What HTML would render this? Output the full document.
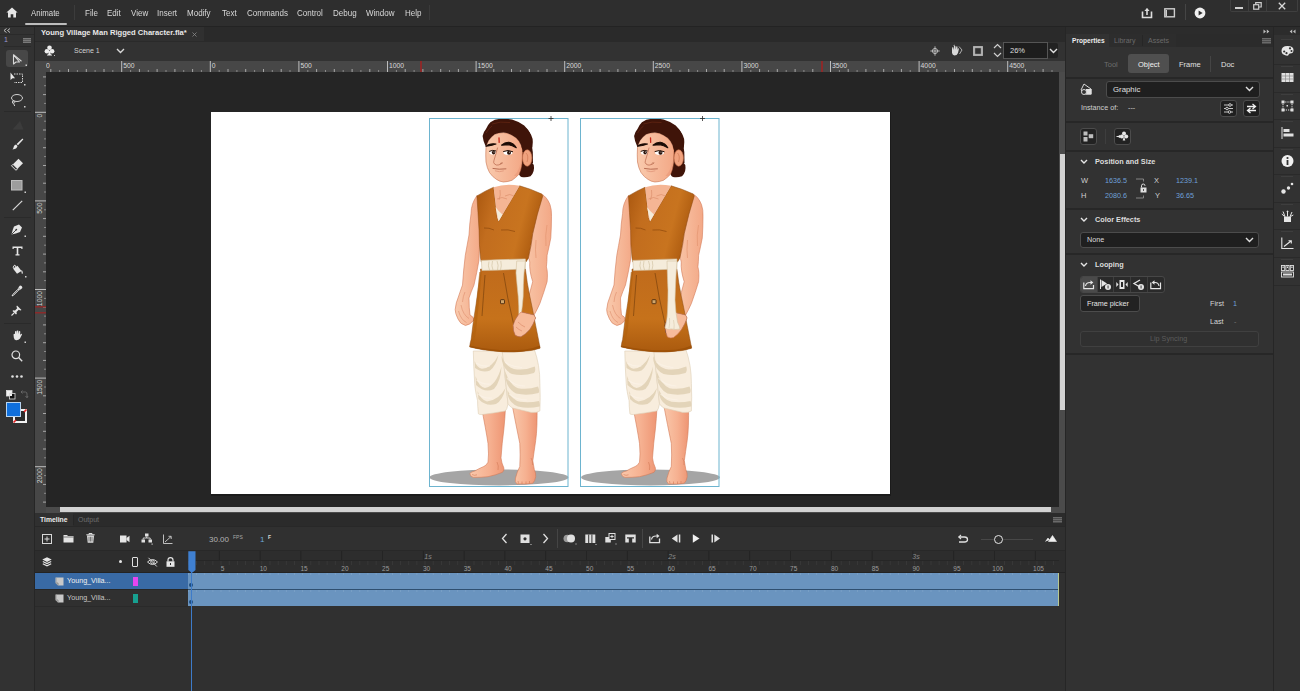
<!DOCTYPE html>
<html><head><meta charset="utf-8">
<style>
*{margin:0;padding:0;box-sizing:border-box}
html,body{width:1300px;height:691px;overflow:hidden;background:#2e2e2e;font-family:"Liberation Sans",sans-serif;color:#d6d6d6}
.a{position:absolute}
.t{position:absolute;white-space:nowrap;font-size:8px;line-height:10px;color:#d0d0d0}
.b{font-weight:bold}
svg{position:absolute;overflow:visible}
</style></head><body>
<!-- MENUBAR -->
<div class="a" style="left:0;top:0;width:1300px;height:26px;background:#2e2e2e"></div>
<div class="a" style="left:0;top:26px;width:1300px;height:1px;background:#232323"></div>
<svg style="left:6px;top:7px" width="12" height="11" viewBox="0 0 12 11"><path d="M6 0.5 L11.6 5.6 L10 5.6 L10 10.5 L7.3 10.5 L7.3 7.3 L4.7 7.3 L4.7 10.5 L2 10.5 L2 5.6 L0.4 5.6 Z" fill="#e6e6e6"/></svg>
<div class="t" style="left:31px;top:7.5px;color:#dcdcdc;font-size:9px;transform:scaleX(.87);transform-origin:0 0">Animate</div>
<div class="a" style="left:25px;top:23px;width:42px;height:2px;background:#bdbdbd;border-radius:1px"></div>
<div class="a" style="left:74px;top:5px;width:1px;height:15px;background:#3c3c3c"></div>
<div class="t" style="left:85px;top:7.5px;font-size:9px;transform:scaleX(.89);transform-origin:0 0;color:#d8d8d8">File</div>
<div class="t" style="left:107px;top:7.5px;font-size:9px;transform:scaleX(.89);transform-origin:0 0;color:#d8d8d8">Edit</div>
<div class="t" style="left:131px;top:7.5px;font-size:9px;transform:scaleX(.89);transform-origin:0 0;color:#d8d8d8">View</div>
<div class="t" style="left:157px;top:7.5px;font-size:9px;transform:scaleX(.89);transform-origin:0 0;color:#d8d8d8">Insert</div>
<div class="t" style="left:187px;top:7.5px;font-size:9px;transform:scaleX(.89);transform-origin:0 0;color:#d8d8d8">Modify</div>
<div class="t" style="left:222px;top:7.5px;font-size:9px;transform:scaleX(.89);transform-origin:0 0;color:#d8d8d8">Text</div>
<div class="t" style="left:247px;top:7.5px;font-size:9px;transform:scaleX(.89);transform-origin:0 0;color:#d8d8d8">Commands</div>
<div class="t" style="left:297px;top:7.5px;font-size:9px;transform:scaleX(.89);transform-origin:0 0;color:#d8d8d8">Control</div>
<div class="t" style="left:333px;top:7.5px;font-size:9px;transform:scaleX(.89);transform-origin:0 0;color:#d8d8d8">Debug</div>
<div class="t" style="left:366px;top:7.5px;font-size:9px;transform:scaleX(.89);transform-origin:0 0;color:#d8d8d8">Window</div>
<div class="t" style="left:405px;top:7.5px;font-size:9px;transform:scaleX(.89);transform-origin:0 0;color:#d8d8d8">Help</div>
<div class="a" style="left:429px;top:5px;width:1px;height:15px;background:#3a3a3a"></div>
<svg style="left:1141px;top:7px" width="12" height="12" viewBox="0 0 12 12"><path d="M1.5 4.5 V10.5 H10.5 V4.5" fill="none" stroke="#dedede" stroke-width="1.6"/><path d="M6 8 V1.8" stroke="#dedede" stroke-width="1.6"/><path d="M3.4 4 L6 1 L8.6 4 Z" fill="#dedede"/></svg>
<svg style="left:1164px;top:8px" width="12" height="10" viewBox="0 0 12 10"><rect x="0.8" y="0.8" width="9.6" height="8" fill="none" stroke="#cfcfcf" stroke-width="1.4"/><rect x="1.5" y="2" width="1.5" height="6" fill="#cfcfcf"/></svg>
<div class="a" style="left:1185px;top:4px;width:1px;height:16px;background:#454545"></div>
<svg style="left:1194px;top:7px" width="12" height="12" viewBox="0 0 12 12"><circle cx="6" cy="6" r="5.4" fill="#f0f0f0"/><path d="M4.6 3.4 L8.6 6 L4.6 8.6 Z" fill="#2e2e2e"/></svg>
<div class="a" style="left:1230px;top:-1px;width:68px;height:13px;border:1px solid #3f3f3f;border-top:none;border-radius:0 0 2px 2px"></div>
<div class="a" style="left:1248px;top:0;width:1px;height:12px;background:#3f3f3f"></div>
<div class="a" style="left:1266px;top:0;width:1px;height:12px;background:#3f3f3f"></div>
<div class="a" style="left:1235px;top:7px;width:8px;height:2px;background:#d0d0d0"></div>
<svg style="left:1253px;top:2px" width="9" height="8" viewBox="0 0 9 8"><rect x="0.7" y="2.7" width="5" height="4.5" fill="none" stroke="#cfcfcf" stroke-width="1.2"/><path d="M2.7 2.5 V0.7 H8.2 V5 H6" fill="none" stroke="#cfcfcf" stroke-width="1.2"/></svg>
<svg style="left:1278px;top:2px" width="8" height="8" viewBox="0 0 8 8"><path d="M0.8 0.8 L7.2 7.2 M7.2 0.8 L0.8 7.2" stroke="#d8d8d8" stroke-width="1.3"/></svg>
<!-- LEFT TOOLBAR -->
<div class="a" style="left:0;top:27px;width:34px;height:664px;background:#323232"></div>
<div class="a" style="left:34px;top:27px;width:1px;height:664px;background:#262626"></div>
<svg style="left:3px;top:28px" width="8" height="5" viewBox="0 0 8 5"><path d="M3.5 0.5 L1 2.5 L3.5 4.5 M7 0.5 L4.5 2.5 L7 4.5" fill="none" stroke="#bdbdbd" stroke-width="1"/></svg>
<div class="a" style="left:0;top:34px;width:34px;height:1px;background:#2a2a2a"></div>
<div class="t" style="left:4px;top:35px;font-size:7px;color:#9a9ad0">1</div>
<div class="a" style="left:23px;top:38px;width:8px;height:5px;background:repeating-linear-gradient(#7a7a7a 0 1px,#5a5a5a 1px 2px)"></div>
<div class="a" style="left:4px;top:46px;width:27px;height:1px;background:#2a2a2a"></div>
<div class="a" style="left:6px;top:50px;width:22px;height:17px;background:#474747;border-radius:3px"></div>
<svg style="left:12px;top:54px" width="17" height="13" viewBox="0 0 17 13"><path d="M1.5 0.8 L1.5 10 L4 8 L7.5 8 Z" fill="none" stroke="#d8d8d8" stroke-width="1.1" stroke-linejoin="round"/><path d="M1.5 0.8 L9.5 7.3" stroke="#d8d8d8" stroke-width="1.1"/><rect x="13.5" y="10.5" width="1.5" height="1.5" fill="#cfcfcf"/></svg>
<svg style="left:10px;top:72px" width="17" height="14" viewBox="0 0 17 14"><path d="M0.5 0.5 L0.5 8 L2.5 6.3 L5 6.3 Z" fill="#e8e8e8"/><path d="M4 2 H12.5 V10.5 H4" fill="none" stroke="#d6d6d6" stroke-width="1" stroke-dasharray="1.5 1"/><rect x="14" y="12" width="1.5" height="1.5" fill="#cfcfcf"/></svg>
<svg style="left:10px;top:93px" width="17" height="15" viewBox="0 0 17 15"><ellipse cx="7" cy="5" rx="5.5" ry="3.5" fill="none" stroke="#d0d0d0" stroke-width="1"/><path d="M3.5 7.5 Q1.5 9 3 10.5 Q5 11.5 4.5 13" fill="none" stroke="#d0d0d0" stroke-width="1"/><circle cx="3.7" cy="9" r="1.2" fill="none" stroke="#d0d0d0" stroke-width="0.8"/><rect x="14" y="13" width="1.5" height="1.5" fill="#cfcfcf"/></svg>
<div class="a" style="left:4px;top:111px;width:27px;height:1px;background:#2a2a2a"></div>
<svg style="left:12px;top:120px" width="12" height="10" viewBox="0 0 12 10"><path d="M0.5 9.5 L8 1 L11.5 9.5 Z" fill="#3c3c3c"/></svg>
<svg style="left:12px;top:138px" width="12" height="12" viewBox="0 0 12 12"><path d="M10.5 0.6 L11.3 1.4 L6 7.3 L4.6 6 Z" fill="#e8e8e8"/><path d="M4 6.6 L5.5 8 Q5 11 0.5 11.5 Q1.5 10.5 1.7 8.7 Q2.3 6.8 4 6.6 Z" fill="#e8e8e8"/></svg>
<svg style="left:11px;top:158px" width="13" height="13" viewBox="0 0 13 13"><path d="M7.5 0.8 L12 5.3 L6.5 10.8 L2 6.3 Z" fill="#e6e6e6"/><path d="M2 6.3 L6.5 10.8 L5 12.3 L0.5 7.8 Z" fill="none" stroke="#e6e6e6" stroke-width="1"/></svg>
<svg style="left:11px;top:180px" width="16" height="14" viewBox="0 0 16 14"><rect x="0.5" y="0.5" width="10.5" height="9.5" fill="#9d9d9d" stroke="#bdbdbd" stroke-width="1"/><rect x="13.5" y="11.5" width="1.5" height="1.5" fill="#cfcfcf"/></svg>
<svg style="left:12px;top:200px" width="11" height="11" viewBox="0 0 11 11"><path d="M0.8 10.2 L10.2 0.8" stroke="#d8d8d8" stroke-width="1.2"/></svg>
<div class="a" style="left:4px;top:217px;width:27px;height:1px;background:#2a2a2a"></div>
<svg style="left:11px;top:224px" width="16" height="14" viewBox="0 0 16 14"><path d="M8 0.5 L11 3.5 L9 8 Q5 9.5 0.5 10.5 Q1.5 6 3 2.5 Z" fill="#e6e6e6"/><path d="M0.8 10.2 L5 6" stroke="#323232" stroke-width="0.9"/><circle cx="5.3" cy="5.6" r="0.9" fill="#323232"/><rect x="13.5" y="11.5" width="1.5" height="1.5" fill="#cfcfcf"/></svg>
<svg style="left:12px;top:246px" width="11" height="10" viewBox="0 0 11 10"><path d="M0.5 0.5 H10.5 V3 H9.3 V1.9 H6.3 V8.3 H7.5 V9.5 H3.5 V8.3 H4.7 V1.9 H1.7 V3 H0.5 Z" fill="#e6e6e6"/></svg>
<svg style="left:12px;top:264px" width="15" height="14" viewBox="0 0 15 14"><path d="M1 4.5 L5.5 1.8 L9.5 7 L5 9.8 Z" fill="#e6e6e6"/><path d="M1.2 4 Q1 1.5 3 1 L3.5 3" fill="none" stroke="#e6e6e6" stroke-width="0.9"/><path d="M9.5 6.5 Q10.5 8 10.2 9.6" fill="none" stroke="#e6e6e6" stroke-width="1.2"/><rect x="13" y="12" width="1.5" height="1.5" fill="#cfcfcf"/></svg>
<svg style="left:11px;top:285px" width="12" height="12" viewBox="0 0 12 12"><path d="M9 0.5 Q11.5 0.5 11.3 3 L9.5 4.7 L7.3 2.5 Z" fill="#e6e6e6"/><path d="M7 3.5 L8.5 5" stroke="#e6e6e6" stroke-width="1.4"/><path d="M7 4.2 L2 9.3 L1 11 L2.7 10 L7.8 5" fill="none" stroke="#e6e6e6" stroke-width="1"/></svg>
<svg style="left:11px;top:305px" width="11" height="11" viewBox="0 0 11 11"><path d="M6 0.5 L10.5 5 L9.3 5.6 L7.7 4.8 L5.5 7 L5.8 8.8 L5 9.5 L1.5 6 L2.2 5.2 L4 5.5 L6.2 3.3 L5.4 1.7 Z" fill="#e6e6e6"/><path d="M3.2 7.8 L0.5 10.5" stroke="#e6e6e6" stroke-width="1.1"/></svg>
<div class="a" style="left:4px;top:323px;width:27px;height:1px;background:#2a2a2a"></div>
<svg style="left:11px;top:330px" width="16" height="14" viewBox="0 0 16 14"><path d="M2.5 4.5 Q3 3.5 4 4 L4 1.8 Q4.3 0.8 5.3 1.2 L5.5 4 L5.7 0.8 Q6.5 0 7.3 0.8 L7.3 4 L8 1.2 Q9 0.7 9.3 1.7 L9 5 L10 3.8 Q11 3.6 11 4.5 L9 8.5 Q7.5 10.5 5 10.3 Q3.2 10 2.8 7.5 Z" fill="#e6e6e6"/><rect x="13.5" y="11.5" width="1.5" height="1.5" fill="#cfcfcf"/></svg>
<svg style="left:11px;top:350px" width="12" height="12" viewBox="0 0 12 12"><circle cx="4.8" cy="4.8" r="3.8" fill="none" stroke="#e0e0e0" stroke-width="1.2"/><path d="M7.6 7.6 L11.2 11.2" stroke="#e0e0e0" stroke-width="1.4"/></svg>
<svg style="left:11px;top:375px" width="12" height="3" viewBox="0 0 12 3"><circle cx="1.5" cy="1.5" r="1.3" fill="#e0e0e0"/><circle cx="6" cy="1.5" r="1.3" fill="#e0e0e0"/><circle cx="10.5" cy="1.5" r="1.3" fill="#e0e0e0"/></svg>
<svg style="left:6px;top:390px" width="10" height="10" viewBox="0 0 10 10"><rect x="0.5" y="0.5" width="5.5" height="5.5" fill="#f0f0f0" stroke="#ddd" stroke-width="0.8"/><rect x="3.5" y="3.5" width="5.5" height="5.5" fill="#111" stroke="#ddd" stroke-width="0.8"/><rect x="3.5" y="3.5" width="2.5" height="2.5" fill="#f0f0f0"/></svg>
<svg style="left:20px;top:390px" width="8" height="9" viewBox="0 0 8 9"><path d="M1 2 H5.5 Q7 2 7 4 V7.5 M5.5 6 L7 7.8 L8 6 M2.5 0.5 L1 2 L2.5 3.5" fill="none" stroke="#6a6a6a" stroke-width="0.9"/></svg>
<div class="a" style="left:13px;top:409px;width:14px;height:14px;border:2.5px solid #f2f2f2;background:#2b2b2b"></div>
<svg style="left:13px;top:409px" width="14" height="14" viewBox="0 0 14 14"><path d="M0.5 13.5 L3 11 M11 3 L13.5 0.5" stroke="#e02020" stroke-width="1.6"/></svg>
<div class="a" style="left:6px;top:402px;width:15px;height:15px;background:#0f6fdc;border:1px solid #b8d4f0"></div>
<!-- DOC TABS & SCENE BAR -->
<div class="a" style="left:35px;top:27px;width:1030px;height:15px;background:#2a2a2a"></div>
<div class="a" style="left:35px;top:27px;width:169px;height:14px;background:#303030"></div>
<div class="t b" style="left:41px;top:28px;font-size:7.6px;color:#e8e8e8">Young Village Man Rigged Character.fla*</div>
<svg style="left:192px;top:32px" width="5" height="5" viewBox="0 0 5 5"><path d="M0.5 0.5 L4.5 4.5 M4.5 0.5 L0.5 4.5" stroke="#8a8a8a" stroke-width="0.8"/></svg>
<div class="a" style="left:35px;top:42px;width:1030px;height:19px;background:#323232"></div>
<svg style="left:44px;top:45px" width="12" height="12" viewBox="0 0 12 12"><circle cx="5.5" cy="2.8" r="2.3" fill="#eee"/><circle cx="2.9" cy="6.2" r="2.3" fill="#eee"/><circle cx="8.1" cy="6.2" r="2.3" fill="#eee"/><path d="M5.5 5 L7 10 H4 Z" fill="#eee"/><rect x="3" y="9.6" width="5" height="0.9" fill="#eee"/><rect x="10" y="10" width="1" height="1" fill="#bbb"/></svg>
<div class="t" style="left:74px;top:46px;font-size:7px">Scene 1</div>
<svg style="left:116px;top:48px" width="9" height="6" viewBox="0 0 9 6"><path d="M1 1 L4.5 4.5 L8 1" fill="none" stroke="#d8d8d8" stroke-width="1.4"/></svg>
<svg style="left:930px;top:46px" width="10" height="10" viewBox="0 0 10 10"><circle cx="5" cy="5" r="2.6" fill="none" stroke="#d0d0d0" stroke-width="0.8"/><path d="M5 0.3 V9.7 M0.3 5 H9.7" stroke="#d0d0d0" stroke-width="0.8"/></svg>
<svg style="left:950px;top:45px" width="13" height="11" viewBox="0 0 13 11"><path d="M2 4 Q2 2 3 2 L3.5 5 L4 1 Q5 0.5 5.5 1.5 L5.7 4.5 L6.3 1.5 Q7.3 1 7.5 2 L7.4 5 L8 3 Q9 3 8.8 4.5 L8 8 Q7 10.5 4.5 10.5 Q2.5 10 2 8 Z" fill="#d8d8d8"/><path d="M9 1.5 L12 5 L9.5 9" fill="none" stroke="#bbb" stroke-width="0.9"/><path d="M3.5 0.5 L5 0.2" stroke="#bbb" stroke-width="0.8"/></svg>
<svg style="left:973px;top:46px" width="10" height="10" viewBox="0 0 10 10"><rect x="0" y="0" width="10" height="10" fill="#9a9a9a"/><rect x="2.2" y="2.2" width="5.6" height="5.6" fill="#323232"/><rect x="1" y="1" width="8" height="8" fill="none" stroke="#c8c8c8" stroke-width="0.8"/></svg>
<svg style="left:993px;top:43px" width="9" height="15" viewBox="0 0 9 15"><path d="M1 5 L4.5 1.5 L8 5 M1 10 L4.5 13.5 L8 10" fill="none" stroke="#d0d0d0" stroke-width="1.2"/></svg>
<div class="a" style="left:1003px;top:42px;width:45px;height:17px;background:#1d1d1d;border:1px solid #555"></div>
<div class="t" style="left:1010px;top:46px;font-size:7.5px;color:#dedede">26%</div>
<div class="a" style="left:1048px;top:43px;width:10px;height:15px;background:#222;border-radius:0 2px 2px 0"></div>
<svg style="left:1049px;top:48px" width="9" height="6" viewBox="0 0 9 6"><path d="M1 1 L4.5 4.5 L8 1" fill="none" stroke="#e0e0e0" stroke-width="1.4"/></svg>
<!-- RULERS / PASTEBOARD -->
<div class="a" style="left:35px;top:61px;width:1030px;height:11px;background:#474747"></div>
<div class="a" style="left:35px;top:61px;width:11px;height:452px;background:#474747"></div>
<div class="a" style="left:46px;top:72px;width:1013px;height:435px;background:#252525"></div>
<svg style="left:46px;top:61px;overflow:hidden" width="1019" height="11" viewBox="0 0 1019 11"><rect x="4.3" y="8" width="1" height="3" fill="#a8a8a8"/><rect x="13.2" y="9" width="1" height="2" fill="#8a8a8a"/><rect x="22.0" y="8" width="1" height="3" fill="#a8a8a8"/><rect x="30.9" y="9" width="1" height="2" fill="#8a8a8a"/><rect x="39.8" y="8" width="1" height="3" fill="#a8a8a8"/><rect x="48.6" y="9" width="1" height="2" fill="#8a8a8a"/><rect x="57.5" y="8" width="1" height="3" fill="#a8a8a8"/><rect x="66.3" y="9" width="1" height="2" fill="#8a8a8a"/><text x="-11.4" y="7" font-size="6.8" fill="#d8d8d8" font-family="Liberation Sans">1000</text><rect x="75.2" y="0" width="1" height="11" fill="#bdbdbd"/><rect x="84.1" y="9" width="1" height="2" fill="#8a8a8a"/><rect x="92.9" y="8" width="1" height="3" fill="#a8a8a8"/><rect x="101.8" y="9" width="1" height="2" fill="#8a8a8a"/><rect x="110.6" y="8" width="1" height="3" fill="#a8a8a8"/><rect x="119.5" y="9" width="1" height="2" fill="#8a8a8a"/><rect x="128.4" y="8" width="1" height="3" fill="#a8a8a8"/><rect x="137.2" y="9" width="1" height="2" fill="#8a8a8a"/><rect x="146.1" y="8" width="1" height="3" fill="#a8a8a8"/><rect x="154.9" y="9" width="1" height="2" fill="#8a8a8a"/><text x="77.2" y="7" font-size="6.8" fill="#d8d8d8" font-family="Liberation Sans">500</text><rect x="163.8" y="0" width="1" height="11" fill="#bdbdbd"/><rect x="172.7" y="9" width="1" height="2" fill="#8a8a8a"/><rect x="181.5" y="8" width="1" height="3" fill="#a8a8a8"/><rect x="190.4" y="9" width="1" height="2" fill="#8a8a8a"/><rect x="199.2" y="8" width="1" height="3" fill="#a8a8a8"/><rect x="208.1" y="9" width="1" height="2" fill="#8a8a8a"/><rect x="217.0" y="8" width="1" height="3" fill="#a8a8a8"/><rect x="225.8" y="9" width="1" height="2" fill="#8a8a8a"/><rect x="234.7" y="8" width="1" height="3" fill="#a8a8a8"/><rect x="243.5" y="9" width="1" height="2" fill="#8a8a8a"/><text x="165.8" y="7" font-size="6.8" fill="#d8d8d8" font-family="Liberation Sans">0</text><rect x="252.4" y="0" width="1" height="11" fill="#bdbdbd"/><rect x="261.3" y="9" width="1" height="2" fill="#8a8a8a"/><rect x="270.1" y="8" width="1" height="3" fill="#a8a8a8"/><rect x="279.0" y="9" width="1" height="2" fill="#8a8a8a"/><rect x="287.8" y="8" width="1" height="3" fill="#a8a8a8"/><rect x="296.7" y="9" width="1" height="2" fill="#8a8a8a"/><rect x="305.6" y="8" width="1" height="3" fill="#a8a8a8"/><rect x="314.4" y="9" width="1" height="2" fill="#8a8a8a"/><rect x="323.3" y="8" width="1" height="3" fill="#a8a8a8"/><rect x="332.1" y="9" width="1" height="2" fill="#8a8a8a"/><text x="254.4" y="7" font-size="6.8" fill="#d8d8d8" font-family="Liberation Sans">500</text><rect x="341.0" y="0" width="1" height="11" fill="#bdbdbd"/><rect x="349.9" y="9" width="1" height="2" fill="#8a8a8a"/><rect x="358.7" y="8" width="1" height="3" fill="#a8a8a8"/><rect x="367.6" y="9" width="1" height="2" fill="#8a8a8a"/><rect x="376.4" y="8" width="1" height="3" fill="#a8a8a8"/><rect x="385.3" y="9" width="1" height="2" fill="#8a8a8a"/><rect x="394.2" y="8" width="1" height="3" fill="#a8a8a8"/><rect x="403.0" y="9" width="1" height="2" fill="#8a8a8a"/><rect x="411.9" y="8" width="1" height="3" fill="#a8a8a8"/><rect x="420.7" y="9" width="1" height="2" fill="#8a8a8a"/><text x="343.0" y="7" font-size="6.8" fill="#d8d8d8" font-family="Liberation Sans">1000</text><rect x="429.6" y="0" width="1" height="11" fill="#bdbdbd"/><rect x="438.5" y="9" width="1" height="2" fill="#8a8a8a"/><rect x="447.3" y="8" width="1" height="3" fill="#a8a8a8"/><rect x="456.2" y="9" width="1" height="2" fill="#8a8a8a"/><rect x="465.0" y="8" width="1" height="3" fill="#a8a8a8"/><rect x="473.9" y="9" width="1" height="2" fill="#8a8a8a"/><rect x="482.8" y="8" width="1" height="3" fill="#a8a8a8"/><rect x="491.6" y="9" width="1" height="2" fill="#8a8a8a"/><rect x="500.5" y="8" width="1" height="3" fill="#a8a8a8"/><rect x="509.3" y="9" width="1" height="2" fill="#8a8a8a"/><text x="431.6" y="7" font-size="6.8" fill="#d8d8d8" font-family="Liberation Sans">1500</text><rect x="518.2" y="0" width="1" height="11" fill="#bdbdbd"/><rect x="527.1" y="9" width="1" height="2" fill="#8a8a8a"/><rect x="535.9" y="8" width="1" height="3" fill="#a8a8a8"/><rect x="544.8" y="9" width="1" height="2" fill="#8a8a8a"/><rect x="553.6" y="8" width="1" height="3" fill="#a8a8a8"/><rect x="562.5" y="9" width="1" height="2" fill="#8a8a8a"/><rect x="571.4" y="8" width="1" height="3" fill="#a8a8a8"/><rect x="580.2" y="9" width="1" height="2" fill="#8a8a8a"/><rect x="589.1" y="8" width="1" height="3" fill="#a8a8a8"/><rect x="597.9" y="9" width="1" height="2" fill="#8a8a8a"/><text x="520.2" y="7" font-size="6.8" fill="#d8d8d8" font-family="Liberation Sans">2000</text><rect x="606.8" y="0" width="1" height="11" fill="#bdbdbd"/><rect x="615.7" y="9" width="1" height="2" fill="#8a8a8a"/><rect x="624.5" y="8" width="1" height="3" fill="#a8a8a8"/><rect x="633.4" y="9" width="1" height="2" fill="#8a8a8a"/><rect x="642.2" y="8" width="1" height="3" fill="#a8a8a8"/><rect x="651.1" y="9" width="1" height="2" fill="#8a8a8a"/><rect x="660.0" y="8" width="1" height="3" fill="#a8a8a8"/><rect x="668.8" y="9" width="1" height="2" fill="#8a8a8a"/><rect x="677.7" y="8" width="1" height="3" fill="#a8a8a8"/><rect x="686.5" y="9" width="1" height="2" fill="#8a8a8a"/><text x="608.8" y="7" font-size="6.8" fill="#d8d8d8" font-family="Liberation Sans">2500</text><rect x="695.4" y="0" width="1" height="11" fill="#bdbdbd"/><rect x="704.3" y="9" width="1" height="2" fill="#8a8a8a"/><rect x="713.1" y="8" width="1" height="3" fill="#a8a8a8"/><rect x="722.0" y="9" width="1" height="2" fill="#8a8a8a"/><rect x="730.8" y="8" width="1" height="3" fill="#a8a8a8"/><rect x="739.7" y="9" width="1" height="2" fill="#8a8a8a"/><rect x="748.6" y="8" width="1" height="3" fill="#a8a8a8"/><rect x="757.4" y="9" width="1" height="2" fill="#8a8a8a"/><rect x="766.3" y="8" width="1" height="3" fill="#a8a8a8"/><rect x="775.1" y="9" width="1" height="2" fill="#8a8a8a"/><text x="697.4" y="7" font-size="6.8" fill="#d8d8d8" font-family="Liberation Sans">3000</text><rect x="784.0" y="0" width="1" height="11" fill="#bdbdbd"/><rect x="792.9" y="9" width="1" height="2" fill="#8a8a8a"/><rect x="801.7" y="8" width="1" height="3" fill="#a8a8a8"/><rect x="810.6" y="9" width="1" height="2" fill="#8a8a8a"/><rect x="819.4" y="8" width="1" height="3" fill="#a8a8a8"/><rect x="828.3" y="9" width="1" height="2" fill="#8a8a8a"/><rect x="837.2" y="8" width="1" height="3" fill="#a8a8a8"/><rect x="846.0" y="9" width="1" height="2" fill="#8a8a8a"/><rect x="854.9" y="8" width="1" height="3" fill="#a8a8a8"/><rect x="863.7" y="9" width="1" height="2" fill="#8a8a8a"/><text x="786.0" y="7" font-size="6.8" fill="#d8d8d8" font-family="Liberation Sans">3500</text><rect x="872.6" y="0" width="1" height="11" fill="#bdbdbd"/><rect x="881.5" y="9" width="1" height="2" fill="#8a8a8a"/><rect x="890.3" y="8" width="1" height="3" fill="#a8a8a8"/><rect x="899.2" y="9" width="1" height="2" fill="#8a8a8a"/><rect x="908.0" y="8" width="1" height="3" fill="#a8a8a8"/><rect x="916.9" y="9" width="1" height="2" fill="#8a8a8a"/><rect x="925.8" y="8" width="1" height="3" fill="#a8a8a8"/><rect x="934.6" y="9" width="1" height="2" fill="#8a8a8a"/><rect x="943.5" y="8" width="1" height="3" fill="#a8a8a8"/><rect x="952.3" y="9" width="1" height="2" fill="#8a8a8a"/><text x="874.6" y="7" font-size="6.8" fill="#d8d8d8" font-family="Liberation Sans">4000</text><rect x="961.2" y="0" width="1" height="11" fill="#bdbdbd"/><rect x="970.1" y="9" width="1" height="2" fill="#8a8a8a"/><rect x="978.9" y="8" width="1" height="3" fill="#a8a8a8"/><rect x="987.8" y="9" width="1" height="2" fill="#8a8a8a"/><rect x="996.6" y="8" width="1" height="3" fill="#a8a8a8"/><rect x="1005.5" y="9" width="1" height="2" fill="#8a8a8a"/><text x="963.2" y="7" font-size="6.8" fill="#d8d8d8" font-family="Liberation Sans">4500</text><rect x="374" y="0" width="2" height="11" fill="#8b2a2a"/><rect x="775" y="0" width="2" height="11" fill="#8b2a2a"/></svg>
<svg style="left:35px;top:72px;overflow:hidden" width="11" height="441" viewBox="0 0 11 441"><rect x="8" y="4.4" width="3" height="1" fill="#a8a8a8"/><rect x="9" y="13.2" width="2" height="1" fill="#8a8a8a"/><rect x="8" y="22.1" width="3" height="1" fill="#a8a8a8"/><rect x="9" y="30.9" width="2" height="1" fill="#8a8a8a"/><rect x="0" y="39.8" width="11" height="1" fill="#bdbdbd"/><rect x="9" y="48.7" width="2" height="1" fill="#8a8a8a"/><rect x="8" y="57.5" width="3" height="1" fill="#a8a8a8"/><rect x="9" y="66.4" width="2" height="1" fill="#8a8a8a"/><rect x="8" y="75.2" width="3" height="1" fill="#a8a8a8"/><rect x="9" y="84.1" width="2" height="1" fill="#8a8a8a"/><rect x="8" y="93.0" width="3" height="1" fill="#a8a8a8"/><rect x="9" y="101.8" width="2" height="1" fill="#8a8a8a"/><rect x="8" y="110.7" width="3" height="1" fill="#a8a8a8"/><rect x="9" y="119.5" width="2" height="1" fill="#8a8a8a"/><text transform="translate(7,41.8) rotate(-90)" text-anchor="end" font-size="6.8" fill="#d8d8d8" font-family="Liberation Sans">0</text><rect x="0" y="128.4" width="11" height="1" fill="#bdbdbd"/><rect x="9" y="137.3" width="2" height="1" fill="#8a8a8a"/><rect x="8" y="146.1" width="3" height="1" fill="#a8a8a8"/><rect x="9" y="155.0" width="2" height="1" fill="#8a8a8a"/><rect x="8" y="163.8" width="3" height="1" fill="#a8a8a8"/><rect x="9" y="172.7" width="2" height="1" fill="#8a8a8a"/><rect x="8" y="181.6" width="3" height="1" fill="#a8a8a8"/><rect x="9" y="190.4" width="2" height="1" fill="#8a8a8a"/><rect x="8" y="199.3" width="3" height="1" fill="#a8a8a8"/><rect x="9" y="208.1" width="2" height="1" fill="#8a8a8a"/><text transform="translate(7,130.4) rotate(-90)" text-anchor="end" font-size="6.8" fill="#d8d8d8" font-family="Liberation Sans">500</text><rect x="0" y="217.0" width="11" height="1" fill="#bdbdbd"/><rect x="9" y="225.9" width="2" height="1" fill="#8a8a8a"/><rect x="8" y="234.7" width="3" height="1" fill="#a8a8a8"/><rect x="9" y="243.6" width="2" height="1" fill="#8a8a8a"/><rect x="8" y="252.4" width="3" height="1" fill="#a8a8a8"/><rect x="9" y="261.3" width="2" height="1" fill="#8a8a8a"/><rect x="8" y="270.2" width="3" height="1" fill="#a8a8a8"/><rect x="9" y="279.0" width="2" height="1" fill="#8a8a8a"/><rect x="8" y="287.9" width="3" height="1" fill="#a8a8a8"/><rect x="9" y="296.7" width="2" height="1" fill="#8a8a8a"/><text transform="translate(7,219.0) rotate(-90)" text-anchor="end" font-size="6.8" fill="#d8d8d8" font-family="Liberation Sans">1000</text><rect x="0" y="305.6" width="11" height="1" fill="#bdbdbd"/><rect x="9" y="314.5" width="2" height="1" fill="#8a8a8a"/><rect x="8" y="323.3" width="3" height="1" fill="#a8a8a8"/><rect x="9" y="332.2" width="2" height="1" fill="#8a8a8a"/><rect x="8" y="341.0" width="3" height="1" fill="#a8a8a8"/><rect x="9" y="349.9" width="2" height="1" fill="#8a8a8a"/><rect x="8" y="358.8" width="3" height="1" fill="#a8a8a8"/><rect x="9" y="367.6" width="2" height="1" fill="#8a8a8a"/><rect x="8" y="376.5" width="3" height="1" fill="#a8a8a8"/><rect x="9" y="385.3" width="2" height="1" fill="#8a8a8a"/><text transform="translate(7,307.6) rotate(-90)" text-anchor="end" font-size="6.8" fill="#d8d8d8" font-family="Liberation Sans">1500</text><rect x="0" y="394.2" width="11" height="1" fill="#bdbdbd"/><rect x="9" y="403.1" width="2" height="1" fill="#8a8a8a"/><rect x="8" y="411.9" width="3" height="1" fill="#a8a8a8"/><rect x="9" y="420.8" width="2" height="1" fill="#8a8a8a"/><rect x="8" y="429.6" width="3" height="1" fill="#a8a8a8"/><text transform="translate(7,396.2) rotate(-90)" text-anchor="end" font-size="6.8" fill="#d8d8d8" font-family="Liberation Sans">2000</text><text transform="translate(7,484.8) rotate(-90)" text-anchor="end" font-size="6.8" fill="#d8d8d8" font-family="Liberation Sans">2500</text><rect x="0" y="234" width="11" height="1.5" fill="#8b2a2a"/><rect x="0" y="240" width="11" height="1.5" fill="#8b2a2a"/></svg>
<div class="a" style="left:210.5px;top:111.5px;width:680px;height:384px;background:#1b1b1b;filter:blur(0.5px)"></div>
<div class="a" style="left:211px;top:112px;width:679px;height:382px;background:#fff"></div>
<div class="a" style="left:1059px;top:72px;width:6px;height:435px;background:#4b4b4b"></div>
<div class="a" style="left:1060px;top:154px;width:5px;height:256px;background:#d2d2d2"></div>
<div class="a" style="left:46px;top:507px;width:1019px;height:6px;background:#4b4b4b"></div>
<div class="a" style="left:60px;top:507px;width:991px;height:5px;background:#d2d2d2"></div>
<!-- TIMELINE -->
<div class="a" style="left:35px;top:513px;width:1030px;height:178px;background:#303030"></div>
<div class="a" style="left:35px;top:513px;width:1030px;height:13px;background:#2b2b2b"></div>
<div class="a" style="left:35px;top:513px;width:38px;height:13px;background:#303030"></div>
<div class="a" style="left:73px;top:515px;width:1px;height:10px;background:#262626"></div>
<div class="t b" style="left:40px;top:515px;font-size:6.8px;color:#ececec">Timeline</div>
<div class="t" style="left:78px;top:515px;font-size:7px;color:#6e6e6e">Output</div>
<div class="a" style="left:1053px;top:517px;width:9px;height:6px;background:repeating-linear-gradient(#6a6a6a 0 1px,#4c4c4c 1px 2px)"></div>
<div class="a" style="left:35px;top:526px;width:1030px;height:1px;background:#282828"></div>
<svg style="left:42px;top:534px" width="10" height="10" viewBox="0 0 10 10"><rect x="0.5" y="0.5" width="9" height="9" fill="none" stroke="#d8d8d8" stroke-width="1"/><path d="M5 2.5 V7.5 M2.5 5 H7.5" stroke="#d8d8d8" stroke-width="1"/></svg>
<svg style="left:63px;top:534px" width="11" height="9" viewBox="0 0 11 9"><path d="M0.5 1 H4 L5 2 H10.5 V8.5 H0.5 Z" fill="#e4e4e4"/><path d="M0.5 3 H10.5" stroke="#303030" stroke-width="0.6"/></svg>
<svg style="left:86px;top:533px" width="9" height="10" viewBox="0 0 9 10"><path d="M0.3 1.8 H8.7 M3 1.8 V0.5 H6 V1.8" fill="none" stroke="#dedede" stroke-width="1"/><path d="M1 2.5 H8 L7.3 9.7 H1.7 Z" fill="#dedede"/><path d="M3 3.8 V8.5 M4.5 3.8 V8.5 M6 3.8 V8.5" stroke="#303030" stroke-width="0.6"/></svg>
<svg style="left:120px;top:535px" width="10" height="8" viewBox="0 0 10 8"><rect x="0" y="0.5" width="6.5" height="7" fill="#e6e6e6"/><path d="M6.5 3 L9.5 0.8 V7.2 L6.5 5 Z" fill="#e6e6e6"/></svg>
<svg style="left:141px;top:533px" width="12" height="12" viewBox="0 0 12 12"><rect x="4" y="0.5" width="3.5" height="3" fill="#e0e0e0"/><rect x="0.5" y="6.5" width="3.5" height="3" fill="#e0e0e0"/><rect x="7.5" y="6.5" width="3.5" height="3" fill="#e0e0e0"/><path d="M5.7 3.5 V5 H2.2 V6.5 M5.7 5 H9.2 V6.5" fill="none" stroke="#e0e0e0" stroke-width="0.9"/><rect x="10.5" y="10.5" width="1.2" height="1.2" fill="#ccc"/></svg>
<svg style="left:163px;top:534px" width="10" height="10" viewBox="0 0 10 10"><path d="M0.5 0.5 V9.5 H9.5" fill="none" stroke="#cfcfcf" stroke-width="0.9"/><path d="M2 8 L8 2.5 M5.5 2.3 H8.2 V5" fill="none" stroke="#cfcfcf" stroke-width="0.9"/></svg>
<div class="a" style="left:35px;top:550px;width:1030px;height:1px;background:#282828"></div>
<div class="a" style="left:35px;top:551px;width:153px;height:21px;background:#2d2d2d"></div>
<svg style="left:42px;top:557px" width="10" height="10" viewBox="0 0 10 10"><path d="M5 0.3 L9.7 2.6 L5 4.9 L0.3 2.6 Z" fill="#e6e6e6"/><path d="M0.8 4.5 L5 6.6 L9.2 4.5" fill="none" stroke="#e6e6e6" stroke-width="1.1"/><path d="M0.8 6.7 L5 8.8 L9.2 6.7" fill="none" stroke="#e6e6e6" stroke-width="1.1"/></svg>
<div class="a" style="left:118.5px;top:560.3px;width:3px;height:3px;border-radius:50%;background:#e6e6e6"></div>
<div class="a" style="left:132px;top:557px;width:6px;height:10px;border:1.3px solid #e0e0e0;border-radius:1px"></div>
<svg style="left:147px;top:557px" width="11" height="10" viewBox="0 0 11 10"><path d="M0.5 5 Q5.5 0 10.5 5 Q5.5 10 0.5 5 Z" fill="none" stroke="#d6d6d6" stroke-width="1"/><circle cx="5.5" cy="5" r="1.8" fill="none" stroke="#d6d6d6" stroke-width="0.9"/><path d="M1.5 0.8 L9.8 9.5" stroke="#d6d6d6" stroke-width="1"/></svg>
<svg style="left:166px;top:557px" width="9" height="10" viewBox="0 0 9 10"><path d="M2 4.5 V3 Q2 0.7 4.5 0.7 Q7 0.7 7 3 V4.5" fill="none" stroke="#e6e6e6" stroke-width="1.2"/><rect x="0.5" y="4.3" width="8" height="5.5" fill="#e6e6e6"/><rect x="4" y="6" width="1" height="2" fill="#2d2d2d"/></svg>
<div class="a" style="left:35px;top:572px;width:153px;height:1px;background:#232323"></div>
<div class="a" style="left:35px;top:573px;width:153px;height:16px;background:#396aa5"></div>
<div class="a" style="left:35px;top:589px;width:153px;height:1px;background:#262626"></div>
<div class="a" style="left:35px;top:606px;width:153px;height:1px;background:#2a2a2a"></div>
<svg style="left:55px;top:577px" width="9" height="9" viewBox="0 0 9 9"><path d="M0.5 0.5 H8.5 V8.5 H3 L0.5 6 Z" fill="#c8c8c8"/><path d="M0.5 6 H3 V8.5" fill="none" stroke="#777" stroke-width="0.7"/><path d="M1.5 0.5 V5.5" stroke="#9a9a9a" stroke-width="0.5"/></svg>
<div class="t" style="left:67px;top:576px;font-size:7.2px;color:#f0f0f0">Young_Villa...</div>
<div class="a" style="left:133px;top:577px;width:5px;height:9px;background:#e645f0"></div>
<svg style="left:55px;top:594px" width="9" height="9" viewBox="0 0 9 9"><path d="M0.5 0.5 H8.5 V8.5 H3 L0.5 6 Z" fill="#c8c8c8"/><path d="M0.5 6 H3 V8.5" fill="none" stroke="#777" stroke-width="0.7"/><path d="M1.5 0.5 V5.5" stroke="#9a9a9a" stroke-width="0.5"/></svg>
<div class="t" style="left:67px;top:593px;font-size:7.2px;color:#c8c8c8">Young_Villa...</div>
<div class="a" style="left:133px;top:594px;width:5px;height:9px;background:#17a090"></div>
<div class="a" style="left:188px;top:551px;width:877px;height:22px;background:#2d2d2d"></div>
<div class="a" style="left:188px;top:560px;width:871px;height:1px;background:#262626"></div>
<div class="a" style="left:188px;top:572px;width:877px;height:1px;background:#232323"></div>
<svg style="left:188px;top:551px" width="877" height="22" viewBox="0 0 877 22"><rect x="0.0" y="10" width="0.8" height="4" fill="#3a3a3a"/><rect x="8.2" y="10" width="0.8" height="4" fill="#3a3a3a"/><rect x="16.3" y="10" width="0.8" height="4" fill="#3a3a3a"/><rect x="24.5" y="10" width="0.8" height="4" fill="#3a3a3a"/><rect x="30.8" y="0" width="1" height="9" fill="#242424"/><rect x="32.6" y="10" width="0.8" height="4" fill="#3a3a3a"/><rect x="40.8" y="10" width="0.8" height="4" fill="#3a3a3a"/><rect x="49.0" y="10" width="0.8" height="4" fill="#3a3a3a"/><rect x="57.1" y="10" width="0.8" height="4" fill="#3a3a3a"/><rect x="65.3" y="10" width="0.8" height="4" fill="#3a3a3a"/><rect x="71.6" y="0" width="1" height="9" fill="#242424"/><rect x="73.4" y="10" width="0.8" height="4" fill="#3a3a3a"/><rect x="81.6" y="10" width="0.8" height="4" fill="#3a3a3a"/><rect x="89.8" y="10" width="0.8" height="4" fill="#3a3a3a"/><rect x="97.9" y="10" width="0.8" height="4" fill="#3a3a3a"/><rect x="106.1" y="10" width="0.8" height="4" fill="#3a3a3a"/><rect x="112.4" y="0" width="1" height="9" fill="#242424"/><rect x="114.2" y="10" width="0.8" height="4" fill="#3a3a3a"/><rect x="122.4" y="10" width="0.8" height="4" fill="#3a3a3a"/><rect x="130.6" y="10" width="0.8" height="4" fill="#3a3a3a"/><rect x="138.7" y="10" width="0.8" height="4" fill="#3a3a3a"/><rect x="146.9" y="10" width="0.8" height="4" fill="#3a3a3a"/><rect x="153.2" y="0" width="1" height="9" fill="#242424"/><rect x="155.0" y="10" width="0.8" height="4" fill="#3a3a3a"/><rect x="163.2" y="10" width="0.8" height="4" fill="#3a3a3a"/><rect x="171.4" y="10" width="0.8" height="4" fill="#3a3a3a"/><rect x="179.5" y="10" width="0.8" height="4" fill="#3a3a3a"/><rect x="187.7" y="10" width="0.8" height="4" fill="#3a3a3a"/><rect x="194.0" y="0" width="1" height="9" fill="#242424"/><rect x="195.8" y="10" width="0.8" height="4" fill="#3a3a3a"/><rect x="204.0" y="10" width="0.8" height="4" fill="#3a3a3a"/><rect x="212.2" y="10" width="0.8" height="4" fill="#3a3a3a"/><rect x="220.3" y="10" width="0.8" height="4" fill="#3a3a3a"/><rect x="228.5" y="10" width="0.8" height="4" fill="#3a3a3a"/><rect x="234.8" y="0" width="1" height="9" fill="#242424"/><rect x="236.6" y="10" width="0.8" height="4" fill="#3a3a3a"/><rect x="244.8" y="10" width="0.8" height="4" fill="#3a3a3a"/><rect x="253.0" y="10" width="0.8" height="4" fill="#3a3a3a"/><rect x="261.1" y="10" width="0.8" height="4" fill="#3a3a3a"/><rect x="269.3" y="10" width="0.8" height="4" fill="#3a3a3a"/><rect x="275.6" y="0" width="1" height="9" fill="#242424"/><rect x="277.4" y="10" width="0.8" height="4" fill="#3a3a3a"/><rect x="285.6" y="10" width="0.8" height="4" fill="#3a3a3a"/><rect x="293.8" y="10" width="0.8" height="4" fill="#3a3a3a"/><rect x="301.9" y="10" width="0.8" height="4" fill="#3a3a3a"/><rect x="310.1" y="10" width="0.8" height="4" fill="#3a3a3a"/><rect x="316.4" y="0" width="1" height="9" fill="#242424"/><rect x="318.2" y="10" width="0.8" height="4" fill="#3a3a3a"/><rect x="326.4" y="10" width="0.8" height="4" fill="#3a3a3a"/><rect x="334.6" y="10" width="0.8" height="4" fill="#3a3a3a"/><rect x="342.7" y="10" width="0.8" height="4" fill="#3a3a3a"/><rect x="350.9" y="10" width="0.8" height="4" fill="#3a3a3a"/><rect x="357.2" y="0" width="1" height="9" fill="#242424"/><rect x="359.0" y="10" width="0.8" height="4" fill="#3a3a3a"/><rect x="367.2" y="10" width="0.8" height="4" fill="#3a3a3a"/><rect x="375.4" y="10" width="0.8" height="4" fill="#3a3a3a"/><rect x="383.5" y="10" width="0.8" height="4" fill="#3a3a3a"/><rect x="391.7" y="10" width="0.8" height="4" fill="#3a3a3a"/><rect x="398.0" y="0" width="1" height="9" fill="#242424"/><rect x="399.8" y="10" width="0.8" height="4" fill="#3a3a3a"/><rect x="408.0" y="10" width="0.8" height="4" fill="#3a3a3a"/><rect x="416.2" y="10" width="0.8" height="4" fill="#3a3a3a"/><rect x="424.3" y="10" width="0.8" height="4" fill="#3a3a3a"/><rect x="432.5" y="10" width="0.8" height="4" fill="#3a3a3a"/><rect x="438.8" y="0" width="1" height="9" fill="#242424"/><rect x="440.6" y="10" width="0.8" height="4" fill="#3a3a3a"/><rect x="448.8" y="10" width="0.8" height="4" fill="#3a3a3a"/><rect x="457.0" y="10" width="0.8" height="4" fill="#3a3a3a"/><rect x="465.1" y="10" width="0.8" height="4" fill="#3a3a3a"/><rect x="473.3" y="10" width="0.8" height="4" fill="#3a3a3a"/><rect x="479.6" y="0" width="1" height="9" fill="#242424"/><rect x="481.4" y="10" width="0.8" height="4" fill="#3a3a3a"/><rect x="489.6" y="10" width="0.8" height="4" fill="#3a3a3a"/><rect x="497.8" y="10" width="0.8" height="4" fill="#3a3a3a"/><rect x="505.9" y="10" width="0.8" height="4" fill="#3a3a3a"/><rect x="514.1" y="10" width="0.8" height="4" fill="#3a3a3a"/><rect x="520.4" y="0" width="1" height="9" fill="#242424"/><rect x="522.2" y="10" width="0.8" height="4" fill="#3a3a3a"/><rect x="530.4" y="10" width="0.8" height="4" fill="#3a3a3a"/><rect x="538.6" y="10" width="0.8" height="4" fill="#3a3a3a"/><rect x="546.7" y="10" width="0.8" height="4" fill="#3a3a3a"/><rect x="554.9" y="10" width="0.8" height="4" fill="#3a3a3a"/><rect x="561.2" y="0" width="1" height="9" fill="#242424"/><rect x="563.0" y="10" width="0.8" height="4" fill="#3a3a3a"/><rect x="571.2" y="10" width="0.8" height="4" fill="#3a3a3a"/><rect x="579.4" y="10" width="0.8" height="4" fill="#3a3a3a"/><rect x="587.5" y="10" width="0.8" height="4" fill="#3a3a3a"/><rect x="595.7" y="10" width="0.8" height="4" fill="#3a3a3a"/><rect x="602.0" y="0" width="1" height="9" fill="#242424"/><rect x="603.8" y="10" width="0.8" height="4" fill="#3a3a3a"/><rect x="612.0" y="10" width="0.8" height="4" fill="#3a3a3a"/><rect x="620.2" y="10" width="0.8" height="4" fill="#3a3a3a"/><rect x="628.3" y="10" width="0.8" height="4" fill="#3a3a3a"/><rect x="636.5" y="10" width="0.8" height="4" fill="#3a3a3a"/><rect x="642.8" y="0" width="1" height="9" fill="#242424"/><rect x="644.6" y="10" width="0.8" height="4" fill="#3a3a3a"/><rect x="652.8" y="10" width="0.8" height="4" fill="#3a3a3a"/><rect x="661.0" y="10" width="0.8" height="4" fill="#3a3a3a"/><rect x="669.1" y="10" width="0.8" height="4" fill="#3a3a3a"/><rect x="677.3" y="10" width="0.8" height="4" fill="#3a3a3a"/><rect x="683.6" y="0" width="1" height="9" fill="#242424"/><rect x="685.4" y="10" width="0.8" height="4" fill="#3a3a3a"/><rect x="693.6" y="10" width="0.8" height="4" fill="#3a3a3a"/><rect x="701.8" y="10" width="0.8" height="4" fill="#3a3a3a"/><rect x="709.9" y="10" width="0.8" height="4" fill="#3a3a3a"/><rect x="718.1" y="10" width="0.8" height="4" fill="#3a3a3a"/><rect x="724.4" y="0" width="1" height="9" fill="#242424"/><rect x="726.2" y="10" width="0.8" height="4" fill="#3a3a3a"/><rect x="734.4" y="10" width="0.8" height="4" fill="#3a3a3a"/><rect x="742.6" y="10" width="0.8" height="4" fill="#3a3a3a"/><rect x="750.7" y="10" width="0.8" height="4" fill="#3a3a3a"/><rect x="758.9" y="10" width="0.8" height="4" fill="#3a3a3a"/><rect x="765.2" y="0" width="1" height="9" fill="#242424"/><rect x="767.0" y="10" width="0.8" height="4" fill="#3a3a3a"/><rect x="775.2" y="10" width="0.8" height="4" fill="#3a3a3a"/><rect x="783.4" y="10" width="0.8" height="4" fill="#3a3a3a"/><rect x="791.5" y="10" width="0.8" height="4" fill="#3a3a3a"/><rect x="799.7" y="10" width="0.8" height="4" fill="#3a3a3a"/><rect x="806.0" y="0" width="1" height="9" fill="#242424"/><rect x="807.8" y="10" width="0.8" height="4" fill="#3a3a3a"/><rect x="816.0" y="10" width="0.8" height="4" fill="#3a3a3a"/><rect x="824.2" y="10" width="0.8" height="4" fill="#3a3a3a"/><rect x="832.3" y="10" width="0.8" height="4" fill="#3a3a3a"/><rect x="840.5" y="10" width="0.8" height="4" fill="#3a3a3a"/><rect x="846.8" y="0" width="1" height="9" fill="#242424"/><rect x="848.6" y="10" width="0.8" height="4" fill="#3a3a3a"/><rect x="856.8" y="10" width="0.8" height="4" fill="#3a3a3a"/><rect x="865.0" y="10" width="0.8" height="4" fill="#3a3a3a"/><text x="34.5" y="20" text-anchor="middle" font-size="6.5" fill="#9c9c9c" font-family="Liberation Sans">5</text><text x="75.3" y="20" text-anchor="middle" font-size="6.5" fill="#9c9c9c" font-family="Liberation Sans">10</text><text x="116.1" y="20" text-anchor="middle" font-size="6.5" fill="#9c9c9c" font-family="Liberation Sans">15</text><text x="156.9" y="20" text-anchor="middle" font-size="6.5" fill="#9c9c9c" font-family="Liberation Sans">20</text><text x="197.7" y="20" text-anchor="middle" font-size="6.5" fill="#9c9c9c" font-family="Liberation Sans">25</text><text x="238.5" y="20" text-anchor="middle" font-size="6.5" fill="#9c9c9c" font-family="Liberation Sans">30</text><text x="279.3" y="20" text-anchor="middle" font-size="6.5" fill="#9c9c9c" font-family="Liberation Sans">35</text><text x="320.1" y="20" text-anchor="middle" font-size="6.5" fill="#9c9c9c" font-family="Liberation Sans">40</text><text x="360.9" y="20" text-anchor="middle" font-size="6.5" fill="#9c9c9c" font-family="Liberation Sans">45</text><text x="401.7" y="20" text-anchor="middle" font-size="6.5" fill="#9c9c9c" font-family="Liberation Sans">50</text><text x="442.5" y="20" text-anchor="middle" font-size="6.5" fill="#9c9c9c" font-family="Liberation Sans">55</text><text x="483.3" y="20" text-anchor="middle" font-size="6.5" fill="#9c9c9c" font-family="Liberation Sans">60</text><text x="524.1" y="20" text-anchor="middle" font-size="6.5" fill="#9c9c9c" font-family="Liberation Sans">65</text><text x="564.9" y="20" text-anchor="middle" font-size="6.5" fill="#9c9c9c" font-family="Liberation Sans">70</text><text x="605.7" y="20" text-anchor="middle" font-size="6.5" fill="#9c9c9c" font-family="Liberation Sans">75</text><text x="646.5" y="20" text-anchor="middle" font-size="6.5" fill="#9c9c9c" font-family="Liberation Sans">80</text><text x="687.3" y="20" text-anchor="middle" font-size="6.5" fill="#9c9c9c" font-family="Liberation Sans">85</text><text x="728.1" y="20" text-anchor="middle" font-size="6.5" fill="#9c9c9c" font-family="Liberation Sans">90</text><text x="768.9" y="20" text-anchor="middle" font-size="6.5" fill="#9c9c9c" font-family="Liberation Sans">95</text><text x="809.7" y="20" text-anchor="middle" font-size="6.5" fill="#9c9c9c" font-family="Liberation Sans">100</text><text x="850.5" y="20" text-anchor="middle" font-size="6.5" fill="#9c9c9c" font-family="Liberation Sans">105</text><text x="240" y="8" text-anchor="middle" font-size="7" font-style="italic" fill="#8c8c8c" font-family="Liberation Sans">1s</text><text x="484" y="8" text-anchor="middle" font-size="7" font-style="italic" fill="#8c8c8c" font-family="Liberation Sans">2s</text><text x="728" y="8" text-anchor="middle" font-size="7" font-style="italic" fill="#8c8c8c" font-family="Liberation Sans">3s</text></svg>
<div class="a" style="left:188px;top:573px;width:871px;height:16px;background:#6a94bf"></div>
<div class="a" style="left:188px;top:589px;width:871px;height:1px;background:#2f4f70"></div>
<div class="a" style="left:188px;top:590px;width:871px;height:16px;background:#6a94bf"></div>
<div class="a" style="left:1058px;top:573px;width:1px;height:33px;background:#b8c890"></div>
<svg style="left:188px;top:573px" width="871" height="33" viewBox="0 0 871 33"><rect x="0.0" y="0.5" width="0.8" height="1" fill="#8fb0d0"/><rect x="0.0" y="17.5" width="0.8" height="1" fill="#8fb0d0"/><rect x="8.2" y="0.5" width="0.8" height="1" fill="#8fb0d0"/><rect x="8.2" y="17.5" width="0.8" height="1" fill="#8fb0d0"/><rect x="16.3" y="0.5" width="0.8" height="1" fill="#8fb0d0"/><rect x="16.3" y="17.5" width="0.8" height="1" fill="#8fb0d0"/><rect x="24.5" y="0.5" width="0.8" height="1" fill="#8fb0d0"/><rect x="24.5" y="17.5" width="0.8" height="1" fill="#8fb0d0"/><rect x="32.6" y="0.5" width="0.8" height="1" fill="#8fb0d0"/><rect x="32.6" y="17.5" width="0.8" height="1" fill="#8fb0d0"/><rect x="40.8" y="0.5" width="0.8" height="1" fill="#8fb0d0"/><rect x="40.8" y="17.5" width="0.8" height="1" fill="#8fb0d0"/><rect x="49.0" y="0.5" width="0.8" height="1" fill="#8fb0d0"/><rect x="49.0" y="17.5" width="0.8" height="1" fill="#8fb0d0"/><rect x="57.1" y="0.5" width="0.8" height="1" fill="#8fb0d0"/><rect x="57.1" y="17.5" width="0.8" height="1" fill="#8fb0d0"/><rect x="65.3" y="0.5" width="0.8" height="1" fill="#8fb0d0"/><rect x="65.3" y="17.5" width="0.8" height="1" fill="#8fb0d0"/><rect x="73.4" y="0.5" width="0.8" height="1" fill="#8fb0d0"/><rect x="73.4" y="17.5" width="0.8" height="1" fill="#8fb0d0"/><rect x="81.6" y="0.5" width="0.8" height="1" fill="#8fb0d0"/><rect x="81.6" y="17.5" width="0.8" height="1" fill="#8fb0d0"/><rect x="89.8" y="0.5" width="0.8" height="1" fill="#8fb0d0"/><rect x="89.8" y="17.5" width="0.8" height="1" fill="#8fb0d0"/><rect x="97.9" y="0.5" width="0.8" height="1" fill="#8fb0d0"/><rect x="97.9" y="17.5" width="0.8" height="1" fill="#8fb0d0"/><rect x="106.1" y="0.5" width="0.8" height="1" fill="#8fb0d0"/><rect x="106.1" y="17.5" width="0.8" height="1" fill="#8fb0d0"/><rect x="114.2" y="0.5" width="0.8" height="1" fill="#8fb0d0"/><rect x="114.2" y="17.5" width="0.8" height="1" fill="#8fb0d0"/><rect x="122.4" y="0.5" width="0.8" height="1" fill="#8fb0d0"/><rect x="122.4" y="17.5" width="0.8" height="1" fill="#8fb0d0"/><rect x="130.6" y="0.5" width="0.8" height="1" fill="#8fb0d0"/><rect x="130.6" y="17.5" width="0.8" height="1" fill="#8fb0d0"/><rect x="138.7" y="0.5" width="0.8" height="1" fill="#8fb0d0"/><rect x="138.7" y="17.5" width="0.8" height="1" fill="#8fb0d0"/><rect x="146.9" y="0.5" width="0.8" height="1" fill="#8fb0d0"/><rect x="146.9" y="17.5" width="0.8" height="1" fill="#8fb0d0"/><rect x="155.0" y="0.5" width="0.8" height="1" fill="#8fb0d0"/><rect x="155.0" y="17.5" width="0.8" height="1" fill="#8fb0d0"/><rect x="163.2" y="0.5" width="0.8" height="1" fill="#8fb0d0"/><rect x="163.2" y="17.5" width="0.8" height="1" fill="#8fb0d0"/><rect x="171.4" y="0.5" width="0.8" height="1" fill="#8fb0d0"/><rect x="171.4" y="17.5" width="0.8" height="1" fill="#8fb0d0"/><rect x="179.5" y="0.5" width="0.8" height="1" fill="#8fb0d0"/><rect x="179.5" y="17.5" width="0.8" height="1" fill="#8fb0d0"/><rect x="187.7" y="0.5" width="0.8" height="1" fill="#8fb0d0"/><rect x="187.7" y="17.5" width="0.8" height="1" fill="#8fb0d0"/><rect x="195.8" y="0.5" width="0.8" height="1" fill="#8fb0d0"/><rect x="195.8" y="17.5" width="0.8" height="1" fill="#8fb0d0"/><rect x="204.0" y="0.5" width="0.8" height="1" fill="#8fb0d0"/><rect x="204.0" y="17.5" width="0.8" height="1" fill="#8fb0d0"/><rect x="212.2" y="0.5" width="0.8" height="1" fill="#8fb0d0"/><rect x="212.2" y="17.5" width="0.8" height="1" fill="#8fb0d0"/><rect x="220.3" y="0.5" width="0.8" height="1" fill="#8fb0d0"/><rect x="220.3" y="17.5" width="0.8" height="1" fill="#8fb0d0"/><rect x="228.5" y="0.5" width="0.8" height="1" fill="#8fb0d0"/><rect x="228.5" y="17.5" width="0.8" height="1" fill="#8fb0d0"/><rect x="236.6" y="0.5" width="0.8" height="1" fill="#8fb0d0"/><rect x="236.6" y="17.5" width="0.8" height="1" fill="#8fb0d0"/><rect x="244.8" y="0.5" width="0.8" height="1" fill="#8fb0d0"/><rect x="244.8" y="17.5" width="0.8" height="1" fill="#8fb0d0"/><rect x="253.0" y="0.5" width="0.8" height="1" fill="#8fb0d0"/><rect x="253.0" y="17.5" width="0.8" height="1" fill="#8fb0d0"/><rect x="261.1" y="0.5" width="0.8" height="1" fill="#8fb0d0"/><rect x="261.1" y="17.5" width="0.8" height="1" fill="#8fb0d0"/><rect x="269.3" y="0.5" width="0.8" height="1" fill="#8fb0d0"/><rect x="269.3" y="17.5" width="0.8" height="1" fill="#8fb0d0"/><rect x="277.4" y="0.5" width="0.8" height="1" fill="#8fb0d0"/><rect x="277.4" y="17.5" width="0.8" height="1" fill="#8fb0d0"/><rect x="285.6" y="0.5" width="0.8" height="1" fill="#8fb0d0"/><rect x="285.6" y="17.5" width="0.8" height="1" fill="#8fb0d0"/><rect x="293.8" y="0.5" width="0.8" height="1" fill="#8fb0d0"/><rect x="293.8" y="17.5" width="0.8" height="1" fill="#8fb0d0"/><rect x="301.9" y="0.5" width="0.8" height="1" fill="#8fb0d0"/><rect x="301.9" y="17.5" width="0.8" height="1" fill="#8fb0d0"/><rect x="310.1" y="0.5" width="0.8" height="1" fill="#8fb0d0"/><rect x="310.1" y="17.5" width="0.8" height="1" fill="#8fb0d0"/><rect x="318.2" y="0.5" width="0.8" height="1" fill="#8fb0d0"/><rect x="318.2" y="17.5" width="0.8" height="1" fill="#8fb0d0"/><rect x="326.4" y="0.5" width="0.8" height="1" fill="#8fb0d0"/><rect x="326.4" y="17.5" width="0.8" height="1" fill="#8fb0d0"/><rect x="334.6" y="0.5" width="0.8" height="1" fill="#8fb0d0"/><rect x="334.6" y="17.5" width="0.8" height="1" fill="#8fb0d0"/><rect x="342.7" y="0.5" width="0.8" height="1" fill="#8fb0d0"/><rect x="342.7" y="17.5" width="0.8" height="1" fill="#8fb0d0"/><rect x="350.9" y="0.5" width="0.8" height="1" fill="#8fb0d0"/><rect x="350.9" y="17.5" width="0.8" height="1" fill="#8fb0d0"/><rect x="359.0" y="0.5" width="0.8" height="1" fill="#8fb0d0"/><rect x="359.0" y="17.5" width="0.8" height="1" fill="#8fb0d0"/><rect x="367.2" y="0.5" width="0.8" height="1" fill="#8fb0d0"/><rect x="367.2" y="17.5" width="0.8" height="1" fill="#8fb0d0"/><rect x="375.4" y="0.5" width="0.8" height="1" fill="#8fb0d0"/><rect x="375.4" y="17.5" width="0.8" height="1" fill="#8fb0d0"/><rect x="383.5" y="0.5" width="0.8" height="1" fill="#8fb0d0"/><rect x="383.5" y="17.5" width="0.8" height="1" fill="#8fb0d0"/><rect x="391.7" y="0.5" width="0.8" height="1" fill="#8fb0d0"/><rect x="391.7" y="17.5" width="0.8" height="1" fill="#8fb0d0"/><rect x="399.8" y="0.5" width="0.8" height="1" fill="#8fb0d0"/><rect x="399.8" y="17.5" width="0.8" height="1" fill="#8fb0d0"/><rect x="408.0" y="0.5" width="0.8" height="1" fill="#8fb0d0"/><rect x="408.0" y="17.5" width="0.8" height="1" fill="#8fb0d0"/><rect x="416.2" y="0.5" width="0.8" height="1" fill="#8fb0d0"/><rect x="416.2" y="17.5" width="0.8" height="1" fill="#8fb0d0"/><rect x="424.3" y="0.5" width="0.8" height="1" fill="#8fb0d0"/><rect x="424.3" y="17.5" width="0.8" height="1" fill="#8fb0d0"/><rect x="432.5" y="0.5" width="0.8" height="1" fill="#8fb0d0"/><rect x="432.5" y="17.5" width="0.8" height="1" fill="#8fb0d0"/><rect x="440.6" y="0.5" width="0.8" height="1" fill="#8fb0d0"/><rect x="440.6" y="17.5" width="0.8" height="1" fill="#8fb0d0"/><rect x="448.8" y="0.5" width="0.8" height="1" fill="#8fb0d0"/><rect x="448.8" y="17.5" width="0.8" height="1" fill="#8fb0d0"/><rect x="457.0" y="0.5" width="0.8" height="1" fill="#8fb0d0"/><rect x="457.0" y="17.5" width="0.8" height="1" fill="#8fb0d0"/><rect x="465.1" y="0.5" width="0.8" height="1" fill="#8fb0d0"/><rect x="465.1" y="17.5" width="0.8" height="1" fill="#8fb0d0"/><rect x="473.3" y="0.5" width="0.8" height="1" fill="#8fb0d0"/><rect x="473.3" y="17.5" width="0.8" height="1" fill="#8fb0d0"/><rect x="481.4" y="0.5" width="0.8" height="1" fill="#8fb0d0"/><rect x="481.4" y="17.5" width="0.8" height="1" fill="#8fb0d0"/><rect x="489.6" y="0.5" width="0.8" height="1" fill="#8fb0d0"/><rect x="489.6" y="17.5" width="0.8" height="1" fill="#8fb0d0"/><rect x="497.8" y="0.5" width="0.8" height="1" fill="#8fb0d0"/><rect x="497.8" y="17.5" width="0.8" height="1" fill="#8fb0d0"/><rect x="505.9" y="0.5" width="0.8" height="1" fill="#8fb0d0"/><rect x="505.9" y="17.5" width="0.8" height="1" fill="#8fb0d0"/><rect x="514.1" y="0.5" width="0.8" height="1" fill="#8fb0d0"/><rect x="514.1" y="17.5" width="0.8" height="1" fill="#8fb0d0"/><rect x="522.2" y="0.5" width="0.8" height="1" fill="#8fb0d0"/><rect x="522.2" y="17.5" width="0.8" height="1" fill="#8fb0d0"/><rect x="530.4" y="0.5" width="0.8" height="1" fill="#8fb0d0"/><rect x="530.4" y="17.5" width="0.8" height="1" fill="#8fb0d0"/><rect x="538.6" y="0.5" width="0.8" height="1" fill="#8fb0d0"/><rect x="538.6" y="17.5" width="0.8" height="1" fill="#8fb0d0"/><rect x="546.7" y="0.5" width="0.8" height="1" fill="#8fb0d0"/><rect x="546.7" y="17.5" width="0.8" height="1" fill="#8fb0d0"/><rect x="554.9" y="0.5" width="0.8" height="1" fill="#8fb0d0"/><rect x="554.9" y="17.5" width="0.8" height="1" fill="#8fb0d0"/><rect x="563.0" y="0.5" width="0.8" height="1" fill="#8fb0d0"/><rect x="563.0" y="17.5" width="0.8" height="1" fill="#8fb0d0"/><rect x="571.2" y="0.5" width="0.8" height="1" fill="#8fb0d0"/><rect x="571.2" y="17.5" width="0.8" height="1" fill="#8fb0d0"/><rect x="579.4" y="0.5" width="0.8" height="1" fill="#8fb0d0"/><rect x="579.4" y="17.5" width="0.8" height="1" fill="#8fb0d0"/><rect x="587.5" y="0.5" width="0.8" height="1" fill="#8fb0d0"/><rect x="587.5" y="17.5" width="0.8" height="1" fill="#8fb0d0"/><rect x="595.7" y="0.5" width="0.8" height="1" fill="#8fb0d0"/><rect x="595.7" y="17.5" width="0.8" height="1" fill="#8fb0d0"/><rect x="603.8" y="0.5" width="0.8" height="1" fill="#8fb0d0"/><rect x="603.8" y="17.5" width="0.8" height="1" fill="#8fb0d0"/><rect x="612.0" y="0.5" width="0.8" height="1" fill="#8fb0d0"/><rect x="612.0" y="17.5" width="0.8" height="1" fill="#8fb0d0"/><rect x="620.2" y="0.5" width="0.8" height="1" fill="#8fb0d0"/><rect x="620.2" y="17.5" width="0.8" height="1" fill="#8fb0d0"/><rect x="628.3" y="0.5" width="0.8" height="1" fill="#8fb0d0"/><rect x="628.3" y="17.5" width="0.8" height="1" fill="#8fb0d0"/><rect x="636.5" y="0.5" width="0.8" height="1" fill="#8fb0d0"/><rect x="636.5" y="17.5" width="0.8" height="1" fill="#8fb0d0"/><rect x="644.6" y="0.5" width="0.8" height="1" fill="#8fb0d0"/><rect x="644.6" y="17.5" width="0.8" height="1" fill="#8fb0d0"/><rect x="652.8" y="0.5" width="0.8" height="1" fill="#8fb0d0"/><rect x="652.8" y="17.5" width="0.8" height="1" fill="#8fb0d0"/><rect x="661.0" y="0.5" width="0.8" height="1" fill="#8fb0d0"/><rect x="661.0" y="17.5" width="0.8" height="1" fill="#8fb0d0"/><rect x="669.1" y="0.5" width="0.8" height="1" fill="#8fb0d0"/><rect x="669.1" y="17.5" width="0.8" height="1" fill="#8fb0d0"/><rect x="677.3" y="0.5" width="0.8" height="1" fill="#8fb0d0"/><rect x="677.3" y="17.5" width="0.8" height="1" fill="#8fb0d0"/><rect x="685.4" y="0.5" width="0.8" height="1" fill="#8fb0d0"/><rect x="685.4" y="17.5" width="0.8" height="1" fill="#8fb0d0"/><rect x="693.6" y="0.5" width="0.8" height="1" fill="#8fb0d0"/><rect x="693.6" y="17.5" width="0.8" height="1" fill="#8fb0d0"/><rect x="701.8" y="0.5" width="0.8" height="1" fill="#8fb0d0"/><rect x="701.8" y="17.5" width="0.8" height="1" fill="#8fb0d0"/><rect x="709.9" y="0.5" width="0.8" height="1" fill="#8fb0d0"/><rect x="709.9" y="17.5" width="0.8" height="1" fill="#8fb0d0"/><rect x="718.1" y="0.5" width="0.8" height="1" fill="#8fb0d0"/><rect x="718.1" y="17.5" width="0.8" height="1" fill="#8fb0d0"/><rect x="726.2" y="0.5" width="0.8" height="1" fill="#8fb0d0"/><rect x="726.2" y="17.5" width="0.8" height="1" fill="#8fb0d0"/><rect x="734.4" y="0.5" width="0.8" height="1" fill="#8fb0d0"/><rect x="734.4" y="17.5" width="0.8" height="1" fill="#8fb0d0"/><rect x="742.6" y="0.5" width="0.8" height="1" fill="#8fb0d0"/><rect x="742.6" y="17.5" width="0.8" height="1" fill="#8fb0d0"/><rect x="750.7" y="0.5" width="0.8" height="1" fill="#8fb0d0"/><rect x="750.7" y="17.5" width="0.8" height="1" fill="#8fb0d0"/><rect x="758.9" y="0.5" width="0.8" height="1" fill="#8fb0d0"/><rect x="758.9" y="17.5" width="0.8" height="1" fill="#8fb0d0"/><rect x="767.0" y="0.5" width="0.8" height="1" fill="#8fb0d0"/><rect x="767.0" y="17.5" width="0.8" height="1" fill="#8fb0d0"/><rect x="775.2" y="0.5" width="0.8" height="1" fill="#8fb0d0"/><rect x="775.2" y="17.5" width="0.8" height="1" fill="#8fb0d0"/><rect x="783.4" y="0.5" width="0.8" height="1" fill="#8fb0d0"/><rect x="783.4" y="17.5" width="0.8" height="1" fill="#8fb0d0"/><rect x="791.5" y="0.5" width="0.8" height="1" fill="#8fb0d0"/><rect x="791.5" y="17.5" width="0.8" height="1" fill="#8fb0d0"/><rect x="799.7" y="0.5" width="0.8" height="1" fill="#8fb0d0"/><rect x="799.7" y="17.5" width="0.8" height="1" fill="#8fb0d0"/><rect x="807.8" y="0.5" width="0.8" height="1" fill="#8fb0d0"/><rect x="807.8" y="17.5" width="0.8" height="1" fill="#8fb0d0"/><rect x="816.0" y="0.5" width="0.8" height="1" fill="#8fb0d0"/><rect x="816.0" y="17.5" width="0.8" height="1" fill="#8fb0d0"/><rect x="824.2" y="0.5" width="0.8" height="1" fill="#8fb0d0"/><rect x="824.2" y="17.5" width="0.8" height="1" fill="#8fb0d0"/><rect x="832.3" y="0.5" width="0.8" height="1" fill="#8fb0d0"/><rect x="832.3" y="17.5" width="0.8" height="1" fill="#8fb0d0"/><rect x="840.5" y="0.5" width="0.8" height="1" fill="#8fb0d0"/><rect x="840.5" y="17.5" width="0.8" height="1" fill="#8fb0d0"/><rect x="848.6" y="0.5" width="0.8" height="1" fill="#8fb0d0"/><rect x="848.6" y="17.5" width="0.8" height="1" fill="#8fb0d0"/><rect x="856.8" y="0.5" width="0.8" height="1" fill="#8fb0d0"/><rect x="856.8" y="17.5" width="0.8" height="1" fill="#8fb0d0"/><rect x="865.0" y="0.5" width="0.8" height="1" fill="#8fb0d0"/><rect x="865.0" y="17.5" width="0.8" height="1" fill="#8fb0d0"/></svg>
<div class="a" style="left:189px;top:583px;width:4px;height:4px;border-radius:50%;background:#1d4c80"></div>
<div class="a" style="left:189px;top:600px;width:4px;height:4px;border-radius:50%;background:#1d4c80"></div>
<div class="a" style="left:190.5px;top:571px;width:1px;height:120px;background:#3d7bc9"></div>
<svg style="left:188px;top:551px" width="8" height="22" viewBox="0 0 8 22"><path d="M0.3 0.3 H7.5 V19 L4.5 21.5 H3.3 L0.3 19 Z" fill="#3f80d2"/></svg>
<div class="t" style="left:209px;top:535px;font-size:8px;color:#b4b4b4">30.00</div>
<div class="t" style="left:233px;top:532px;font-size:5px;color:#a8a8a8">FPS</div>
<div class="t" style="left:260px;top:535px;font-size:8px;color:#6ea6d8">1</div>
<div class="t b" style="left:268px;top:532px;font-size:5px;color:#d8d8d8">F</div>
<svg style="left:500px;top:533px" width="9" height="11" viewBox="0 0 9 11"><path d="M6.5 1 L2.5 5.5 L6.5 10" fill="none" stroke="#e0e0e0" stroke-width="1.3"/></svg>
<svg style="left:520px;top:534px" width="12" height="12" viewBox="0 0 12 12"><rect x="0.5" y="0.5" width="9" height="8.5" fill="#e0e0e0"/><circle cx="5" cy="4.8" r="1.6" fill="#303030"/><rect x="10.5" y="10" width="1" height="1" fill="#ccc"/></svg>
<svg style="left:541px;top:533px" width="9" height="11" viewBox="0 0 9 11"><path d="M2.5 1 L6.5 5.5 L2.5 10" fill="none" stroke="#e0e0e0" stroke-width="1.3"/></svg>
<div class="a" style="left:557px;top:529px;width:1px;height:19px;background:#454545"></div>
<svg style="left:563px;top:534px" width="14" height="11" viewBox="0 0 14 11"><circle cx="4.3" cy="4.5" r="3.8" fill="#9a9a9a"/><circle cx="8" cy="4.5" r="4" fill="#e0e0e0"/><rect x="12.5" y="9.5" width="1" height="1" fill="#ccc"/></svg>
<svg style="left:585px;top:534px" width="12" height="12" viewBox="0 0 12 12"><rect x="0.3" y="0.5" width="10" height="8.5" fill="#e0e0e0"/><rect x="3.2" y="0.5" width="1" height="8.5" fill="#303030"/><rect x="6.4" y="0.5" width="1" height="8.5" fill="#303030"/><rect x="10.5" y="10" width="1" height="1" fill="#ccc"/></svg>
<svg style="left:605px;top:533px" width="12" height="12" viewBox="0 0 12 12"><rect x="0.3" y="4" width="5.5" height="5.5" fill="#e0e0e0"/><rect x="4" y="0.5" width="6" height="6" fill="#303030" stroke="#e0e0e0" stroke-width="1"/><path d="M7 1.8 V5.2 M5.3 3.5 H8.7" stroke="#e0e0e0" stroke-width="1"/><rect x="10.5" y="10.5" width="1" height="1" fill="#ccc"/></svg>
<svg style="left:625px;top:534px" width="12" height="9" viewBox="0 0 12 9"><path d="M0.3 0.5 H10.7 V8.5 H7.2 V4.5 H9 V3.3 H2 V4.5 H3.8 V8.5 H0.3 Z" fill="#e0e0e0"/></svg>
<div class="a" style="left:642px;top:529px;width:1px;height:19px;background:#454545"></div>
<svg style="left:649px;top:533px" width="12" height="11" viewBox="0 0 12 11"><path d="M0.8 3.5 V9.7 H10.5 V5.5" fill="none" stroke="#e0e0e0" stroke-width="1.3"/><path d="M2.5 6.5 Q3 3 7 3 H8.5" fill="none" stroke="#e0e0e0" stroke-width="1.2"/><path d="M7.7 0.8 L10.5 3 L7.7 5.2 Z" fill="#e0e0e0"/></svg>
<svg style="left:671px;top:534px" width="10" height="9" viewBox="0 0 10 9"><path d="M6.5 0.5 L0.8 4.5 L6.5 8.5 Z" fill="#e0e0e0"/><rect x="7.8" y="0.5" width="1.5" height="8" fill="#e0e0e0"/></svg>
<svg style="left:692px;top:534px" width="8" height="9" viewBox="0 0 8 9"><path d="M0.8 0.3 L7.5 4.5 L0.8 8.7 Z" fill="#f0f0f0"/></svg>
<svg style="left:711px;top:534px" width="10" height="9" viewBox="0 0 10 9"><rect x="0.5" y="0.5" width="1.5" height="8" fill="#e0e0e0"/><path d="M3.3 0.5 L9 4.5 L3.3 8.5 Z" fill="#e0e0e0"/></svg>
<svg style="left:958px;top:534px" width="11" height="9" viewBox="0 0 11 9"><path d="M3 1 L0.8 3 L3 5" fill="none" stroke="#e0e0e0" stroke-width="1.1"/><path d="M0.8 3 H6.5 Q9.5 3 9.5 5.5 Q9.5 8 6.5 8 H1" fill="none" stroke="#e0e0e0" stroke-width="1.3"/></svg>
<div class="a" style="left:981px;top:538.5px;width:52px;height:1px;background:#484848"></div>
<div class="a" style="left:994px;top:534.5px;width:9px;height:9px;border-radius:50%;border:1.5px solid #e6e6e6;background:#303030"></div>
<svg style="left:1045px;top:535px" width="12" height="7" viewBox="0 0 12 7"><path d="M0.5 6.5 L3 3 L4.5 5 M3.5 6.5 L7.5 0.5 L11.5 6.5 Z" fill="#f0f0f0" stroke="#f0f0f0" stroke-width="0.6"/></svg>
<!-- PROPERTIES -->
<div class="a" style="left:1065px;top:27px;width:1px;height:664px;background:#262626"></div>
<div class="a" style="left:1066px;top:27px;width:207px;height:664px;background:#323232"></div>
<div class="a" style="left:1066px;top:27px;width:207px;height:7px;background:#2c2c2c"></div>
<svg style="left:1263px;top:29px" width="7" height="5" viewBox="0 0 7 5"><path d="M0.5 0.5 L3 2.5 L0.5 4.5 Z M3.8 0.5 L6.3 2.5 L3.8 4.5 Z" fill="#bdbdbd"/></svg>
<div class="a" style="left:1066px;top:34px;width:207px;height:13px;background:#2b2b2b"></div>
<div class="a" style="left:1066px;top:34px;width:43px;height:13px;background:#323232"></div>
<div class="a" style="left:1109px;top:34px;width:67px;height:13px;background:#2d2d2d"></div>
<div class="a" style="left:1142px;top:35px;width:1px;height:11px;background:#262626"></div>
<div class="t b" style="left:1072px;top:36px;font-size:6.6px;color:#ececec">Properties</div>
<div class="t" style="left:1114px;top:36px;font-size:7px;color:#6a6a6a">Library</div>
<div class="t" style="left:1148px;top:36px;font-size:7px;color:#6a6a6a">Assets</div>
<div class="a" style="left:1262px;top:38px;width:9px;height:6px;background:repeating-linear-gradient(#6a6a6a 0 1px,#4c4c4c 1px 2px)"></div>
<div class="t" style="left:1104px;top:60px;font-size:7.5px;color:#6e6e6e">Tool</div>
<div class="a" style="left:1128px;top:54px;width:41px;height:19px;background:#4f4f4f;border-radius:3px"></div>
<div class="t" style="left:1138px;top:60px;font-size:7.5px;color:#f0f0f0">Object</div>
<div class="t" style="left:1179px;top:60px;font-size:7.5px;color:#e0e0e0">Frame</div>
<div class="a" style="left:1210px;top:56px;width:1px;height:16px;background:#454545"></div>
<div class="t" style="left:1221px;top:60px;font-size:7.5px;color:#e0e0e0">Doc</div>
<div class="a" style="left:1066px;top:77px;width:207px;height:1.5px;background:#272727"></div>
<svg style="left:1080px;top:83px" width="13" height="13" viewBox="0 0 13 13"><path d="M4 1 L11 6 V11 H5 L1 7 Z" fill="none" stroke="#d8d8d8" stroke-width="1"/><path d="M6 6 H11.5 V11.5 H6 Z" fill="#e0e0e0"/><circle cx="4" cy="9" r="2.5" fill="#323232" stroke="#d8d8d8" stroke-width="1"/></svg>
<div class="a" style="left:1106px;top:81px;width:154px;height:17px;background:#1f1f1f;border:1px solid #4c4c4c;border-radius:3px"></div>
<div class="t" style="left:1113px;top:85px;font-size:7.8px;color:#e0e0e0">Graphic</div>
<svg style="left:1245px;top:86px" width="9" height="6" viewBox="0 0 9 6"><path d="M1 1 L4.5 4.5 L8 1" fill="none" stroke="#e0e0e0" stroke-width="1.4"/></svg>
<div class="t" style="left:1081px;top:103px;font-size:7.2px;color:#cfcfcf">Instance of:</div>
<div class="t" style="left:1128px;top:103px;font-size:7.2px;color:#cfcfcf">---</div>
<div class="a" style="left:1220px;top:100px;width:17px;height:17px;background:#1f1f1f;border:1px solid #4c4c4c;border-radius:3px"></div>
<div class="a" style="left:1243px;top:100px;width:17px;height:17px;background:#1f1f1f;border:1px solid #4c4c4c;border-radius:3px"></div>
<svg style="left:1223px;top:103px" width="11" height="11" viewBox="0 0 11 11"><path d="M1 2 H10 M1 5.5 H10 M1 9 H10" stroke="#d8d8d8" stroke-width="0.9"/><circle cx="7" cy="2" r="1.3" fill="#1f1f1f" stroke="#d8d8d8" stroke-width="0.9"/><circle cx="4" cy="5.5" r="1.3" fill="#1f1f1f" stroke="#d8d8d8" stroke-width="0.9"/><circle cx="6.5" cy="9" r="1.3" fill="#1f1f1f" stroke="#d8d8d8" stroke-width="0.9"/></svg>
<svg style="left:1246px;top:103px" width="11" height="11" viewBox="0 0 11 11"><path d="M1 3.5 H9 M6.5 1 L9.5 3.5 L6.5 6 M10 7.5 H2 M4.5 5 L1.5 7.5 L4.5 10" fill="none" stroke="#f0f0f0" stroke-width="1.3"/></svg>
<div class="a" style="left:1066px;top:121px;width:207px;height:1.5px;background:#272727"></div>
<div class="a" style="left:1080px;top:128px;width:17px;height:17px;background:#222;border:1px solid #4c4c4c;border-radius:3px"></div>
<div class="a" style="left:1114px;top:128px;width:17px;height:17px;background:#222;border:1px solid #4c4c4c;border-radius:3px"></div>
<div class="a" style="left:1105px;top:129px;width:1px;height:15px;background:#3e3e3e"></div>
<svg style="left:1083px;top:131px" width="11" height="11" viewBox="0 0 11 11"><rect x="0.5" y="0.5" width="4" height="4" fill="#bdbdbd"/><rect x="0.5" y="6" width="4" height="4.5" fill="#bdbdbd"/><rect x="5.7" y="3.2" width="4.5" height="4" fill="#bdbdbd"/></svg>
<svg style="left:1116px;top:131px" width="13" height="11" viewBox="0 0 13 11"><circle cx="8" cy="2.5" r="2" fill="#e6e6e6"/><circle cx="5.8" cy="5.5" r="2" fill="#e6e6e6"/><circle cx="10.2" cy="5.5" r="2" fill="#e6e6e6"/><path d="M8 5 L9.3 9.5 H6.7 Z" fill="#e6e6e6"/><path d="M0.5 5.5 H4 M2.8 4 L4.3 5.5 L2.8 7" fill="none" stroke="#e6e6e6" stroke-width="1"/></svg>
<div class="a" style="left:1066px;top:150px;width:207px;height:1.5px;background:#272727"></div>
<svg style="left:1080px;top:159px" width="8" height="6" viewBox="0 0 8 6"><path d="M1 1 L4 4 L7 1" fill="none" stroke="#e6e6e6" stroke-width="1.4"/></svg>
<div class="t b" style="left:1095px;top:157px;font-size:7.3px;color:#dcdcdc">Position and Size</div>
<div class="t" style="left:1081px;top:176px;font-size:7.5px;color:#cfcfcf">W</div>
<div class="t" style="left:1105px;top:176px;font-size:7.2px;color:#6fa0d8">1636.5</div>
<div class="t" style="left:1154px;top:176px;font-size:7.5px;color:#cfcfcf">X</div>
<div class="t" style="left:1176px;top:176px;font-size:7.2px;color:#6fa0d8">1239.1</div>
<div class="t" style="left:1081px;top:191px;font-size:7.5px;color:#cfcfcf">H</div>
<div class="t" style="left:1105px;top:191px;font-size:7.2px;color:#6fa0d8">2080.6</div>
<div class="t" style="left:1155px;top:191px;font-size:7.5px;color:#cfcfcf">Y</div>
<div class="t" style="left:1176px;top:191px;font-size:7.2px;color:#6fa0d8">36.65</div>
<svg style="left:1135px;top:178px" width="12" height="21" viewBox="0 0 12 21"><path d="M1 1 H8.5 V3.5 M1 20 H8.5 V17.5" fill="none" stroke="#9a9a9a" stroke-width="0.8"/><path d="M6.5 9.5 V7.8 Q6.5 6 8.3 6 Q10 6 10 7.8" fill="none" stroke="#e0e0e0" stroke-width="1"/><rect x="5.5" y="9.5" width="6" height="5" fill="#e0e0e0"/><rect x="8.2" y="11" width="0.8" height="2" fill="#323232"/></svg>
<div class="a" style="left:1066px;top:208px;width:207px;height:1.5px;background:#272727"></div>
<svg style="left:1080px;top:217px" width="8" height="6" viewBox="0 0 8 6"><path d="M1 1 L4 4 L7 1" fill="none" stroke="#e6e6e6" stroke-width="1.4"/></svg>
<div class="t b" style="left:1095px;top:215px;font-size:7.3px;color:#dcdcdc">Color Effects</div>
<div class="a" style="left:1080px;top:232px;width:179px;height:16px;background:#1f1f1f;border:1px solid #4c4c4c;border-radius:3px"></div>
<div class="t" style="left:1087px;top:235px;font-size:7.2px;color:#dedede">None</div>
<svg style="left:1245px;top:237px" width="9" height="6" viewBox="0 0 9 6"><path d="M1 1 L4.5 4.5 L8 1" fill="none" stroke="#e0e0e0" stroke-width="1.4"/></svg>
<div class="a" style="left:1066px;top:253px;width:207px;height:1.5px;background:#272727"></div>
<svg style="left:1080px;top:262px" width="8" height="6" viewBox="0 0 8 6"><path d="M1 1 L4 4 L7 1" fill="none" stroke="#e6e6e6" stroke-width="1.4"/></svg>
<div class="t b" style="left:1095px;top:260px;font-size:7.3px;color:#dcdcdc">Looping</div>
<div class="a" style="left:1080px;top:276px;width:85px;height:17px;background:#2a2a2a;border:1px solid #474747;border-radius:3px"></div>
<div class="a" style="left:1081px;top:277px;width:16px;height:15px;background:#4a4a4a;border-radius:2px 0 0 2px"></div>
<div class="a" style="left:1097px;top:277px;width:1px;height:15px;background:#3e3e3e"></div>
<div class="a" style="left:1113px;top:277px;width:1px;height:15px;background:#3e3e3e"></div>
<div class="a" style="left:1130px;top:277px;width:1px;height:15px;background:#3e3e3e"></div>
<div class="a" style="left:1147px;top:277px;width:1px;height:15px;background:#3e3e3e"></div>
<svg style="left:1083px;top:279px" width="12" height="11" viewBox="0 0 12 11"><path d="M0.8 3.5 V9.7 H10.5 V6" fill="none" stroke="#e6e6e6" stroke-width="1.2"/><path d="M2.5 7 Q3 3.5 7 3.5 H8" fill="none" stroke="#e6e6e6" stroke-width="1.1"/><path d="M7.5 1.3 L10.3 3.5 L7.5 5.7 Z" fill="#e6e6e6"/></svg>
<svg style="left:1100px;top:279px" width="12" height="12" viewBox="0 0 12 12"><path d="M0.5 0.5 V10" stroke="#e6e6e6" stroke-width="1"/><path d="M1.5 1 L7 4.5 L1.5 8 Z" fill="#e6e6e6"/><circle cx="8" cy="8" r="3" fill="#e6e6e6"/><rect x="7.6" y="6.5" width="0.9" height="3" fill="#2a2a2a"/></svg>
<svg style="left:1116px;top:279px" width="12" height="11" viewBox="0 0 12 11"><path d="M0.3 3 L2.5 5.5 L0.3 8 Z M11.7 3 L9.5 5.5 L11.7 8 Z" fill="#e6e6e6"/><rect x="3.5" y="1" width="5" height="9" fill="#e6e6e6"/><rect x="5" y="3" width="2" height="5" fill="#2a2a2a"/></svg>
<svg style="left:1133px;top:279px" width="12" height="12" viewBox="0 0 12 12"><path d="M7 1 L1 4.5 L7 8" fill="none" stroke="#e6e6e6" stroke-width="1.3"/><circle cx="8" cy="8" r="3" fill="#e6e6e6"/><rect x="7.6" y="6.5" width="0.9" height="3" fill="#2a2a2a"/></svg>
<svg style="left:1150px;top:279px" width="12" height="11" viewBox="0 0 12 11"><path d="M0.8 3.5 V9.7 H10.5 V3.5" fill="none" stroke="#e6e6e6" stroke-width="1.2"/><path d="M9 7 Q8.5 3.5 5 3.5 H4" fill="none" stroke="#e6e6e6" stroke-width="1.1"/><path d="M4.5 1.3 L1.7 3.5 L4.5 5.7 Z" fill="#e6e6e6"/></svg>
<div class="a" style="left:1080px;top:295px;width:60px;height:17px;background:#222;border:1px solid #4c4c4c;border-radius:3px"></div>
<div class="t" style="left:1087px;top:298.5px;font-size:7.2px;color:#e6e6e6">Frame picker</div>
<div class="t" style="left:1210px;top:298.5px;font-size:7.2px;color:#d6d6d6">First</div>
<div class="t" style="left:1233px;top:298.5px;font-size:7.2px;color:#6fa0d8">1</div>
<div class="t" style="left:1210px;top:317px;font-size:7.2px;color:#d6d6d6">Last</div>
<div class="t" style="left:1234px;top:317px;font-size:7.2px;color:#777">-</div>
<div class="a" style="left:1080px;top:331px;width:179px;height:16px;border:1px solid #404040;border-radius:3px;background:#303030"></div>
<div class="t" style="left:1150px;top:334px;font-size:7.2px;color:#5c5c5c">Lip Syncing</div>
<div class="a" style="left:1066px;top:353px;width:207px;height:1.5px;background:#272727"></div>
<div class="a" style="left:1273px;top:27px;width:1px;height:664px;background:#262626"></div>
<div class="a" style="left:1274px;top:27px;width:26px;height:664px;background:#323232"></div>
<div class="a" style="left:1274px;top:27px;width:26px;height:8px;background:#2c2c2c"></div>
<svg style="left:1289px;top:29px" width="7" height="5" viewBox="0 0 7 5"><path d="M3.2 0.5 L0.7 2.5 L3.2 4.5 Z M6.5 0.5 L4 2.5 L6.5 4.5 Z" fill="#bdbdbd"/></svg>
<div class="a" style="left:1274px;top:64.0px;width:26px;height:1px;background:#2a2a2a"></div>
<div class="a" style="left:1281px;top:38.5px;width:12px;height:1px;background:#3e3e3e"></div>
<div class="a" style="left:1274px;top:91.5px;width:26px;height:1px;background:#2a2a2a"></div>
<div class="a" style="left:1281px;top:66.0px;width:12px;height:1px;background:#3e3e3e"></div>
<div class="a" style="left:1274px;top:119.0px;width:26px;height:1px;background:#2a2a2a"></div>
<div class="a" style="left:1281px;top:93.5px;width:12px;height:1px;background:#3e3e3e"></div>
<div class="a" style="left:1274px;top:146.5px;width:26px;height:1px;background:#2a2a2a"></div>
<div class="a" style="left:1281px;top:121.0px;width:12px;height:1px;background:#3e3e3e"></div>
<div class="a" style="left:1274px;top:174.0px;width:26px;height:1px;background:#2a2a2a"></div>
<div class="a" style="left:1281px;top:148.5px;width:12px;height:1px;background:#3e3e3e"></div>
<div class="a" style="left:1274px;top:201.5px;width:26px;height:1px;background:#2a2a2a"></div>
<div class="a" style="left:1281px;top:176.0px;width:12px;height:1px;background:#3e3e3e"></div>
<div class="a" style="left:1274px;top:229.0px;width:26px;height:1px;background:#2a2a2a"></div>
<div class="a" style="left:1281px;top:203.5px;width:12px;height:1px;background:#3e3e3e"></div>
<div class="a" style="left:1274px;top:256.5px;width:26px;height:1px;background:#2a2a2a"></div>
<div class="a" style="left:1281px;top:231.0px;width:12px;height:1px;background:#3e3e3e"></div>
<div class="a" style="left:1274px;top:284.5px;width:26px;height:1px;background:#2a2a2a"></div>
<div class="a" style="left:1281px;top:259.0px;width:12px;height:1px;background:#3e3e3e"></div>
<svg style="left:1280.5px;top:44.5px" width="13" height="12" viewBox="0 0 13 12"><path d="M6.5 1 Q12.5 1 12.5 5 Q12.5 8.5 9 8.5 Q7.5 8.5 7.5 10 Q7 11 5 10.5 Q0.5 9.5 0.5 6 Q0.5 1 6.5 1 Z" fill="#e8e8e8"/><circle cx="3.2" cy="6.5" r="1.1" fill="#323232"/><circle cx="5.5" cy="8.2" r="1.1" fill="#323232"/><circle cx="9" cy="3.3" r="1.1" fill="#323232"/><circle cx="10.5" cy="6" r="1" fill="#323232"/></svg>
<svg style="left:1280.5px;top:72.0px" width="13" height="12" viewBox="0 0 13 12"><rect x="0.5" y="1" width="12" height="9" fill="#e0e0e0"/><path d="M0.5 4 H12.5 M0.5 7 H12.5 M4.5 1 V10 M8.5 1 V10" stroke="#888" stroke-width="0.7"/></svg>
<svg style="left:1280.5px;top:99.5px" width="13" height="12" viewBox="0 0 13 12"><rect x="2" y="2" width="9" height="8" fill="none" stroke="#e0e0e0" stroke-width="1" stroke-dasharray="1.2 1"/><rect x="0.5" y="0.5" width="3" height="3" fill="#e0e0e0"/><rect x="9.5" y="0.5" width="3" height="3" fill="#e0e0e0"/><rect x="0.5" y="8.5" width="3" height="3" fill="#e0e0e0"/><rect x="9.5" y="8.5" width="3" height="3" fill="#e0e0e0"/><rect x="5.5" y="5" width="1.5" height="1.5" fill="#e0e0e0"/></svg>
<svg style="left:1280.5px;top:127.0px" width="13" height="12" viewBox="0 0 13 12"><rect x="0.5" y="0" width="1" height="12" fill="#e0e0e0"/><rect x="2.5" y="2" width="6" height="3" fill="#e0e0e0"/><rect x="2.5" y="6.5" width="10" height="3" fill="#e0e0e0"/></svg>
<svg style="left:1280.5px;top:154.5px" width="13" height="12" viewBox="0 0 13 12"><circle cx="6.5" cy="6" r="6" fill="#f0f0f0"/><rect x="5.6" y="5" width="1.8" height="5" fill="#323232"/><circle cx="6.5" cy="3" r="1.1" fill="#323232"/></svg>
<svg style="left:1280.5px;top:182.0px" width="13" height="12" viewBox="0 0 13 12"><circle cx="2.5" cy="9.5" r="2.2" fill="#e6e6e6"/><circle cx="7.5" cy="6" r="1.7" fill="#e6e6e6"/><circle cx="11" cy="2" r="1.3" fill="#e6e6e6"/></svg>
<svg style="left:1280.5px;top:209.5px" width="13" height="12" viewBox="0 0 13 12"><rect x="3" y="6.5" width="7" height="5.5" fill="#e6e6e6"/><path d="M6.5 6.5 V1 M4 6.5 L2 1.5 M9 6.5 L11 2 M3.5 6.5 L0.8 4 M9.5 6.5 L12.3 5" stroke="#e6e6e6" stroke-width="1"/><path d="M5.3 2 L6.5 0.3 L7.7 2 Z" fill="#e6e6e6"/></svg>
<svg style="left:1280.5px;top:237.0px" width="13" height="12" viewBox="0 0 13 12"><path d="M0.8 0.5 V11.5 H12.5" fill="none" stroke="#e6e6e6" stroke-width="1.1"/><path d="M3 9.5 L10 4 M7.5 3.8 H10.3 V6.5" fill="none" stroke="#e6e6e6" stroke-width="1.1"/></svg>
<svg style="left:1280.5px;top:265.0px" width="13" height="12" viewBox="0 0 13 12"><rect x="0.5" y="0.5" width="3.2" height="5" fill="none" stroke="#e0e0e0" stroke-width="0.9"/><rect x="4.9" y="0.5" width="3.2" height="5" fill="none" stroke="#e0e0e0" stroke-width="0.9"/><rect x="9.3" y="0.5" width="3.2" height="5" fill="none" stroke="#e0e0e0" stroke-width="0.9"/><rect x="0.5" y="7" width="12" height="5" fill="none" stroke="#e0e0e0" stroke-width="0.9"/><rect x="1.5" y="1.5" width="1.2" height="1.5" fill="#e0e0e0"/><rect x="5.9" y="1.5" width="1.2" height="1.5" fill="#e0e0e0"/><rect x="10.3" y="1.5" width="1.2" height="1.5" fill="#e0e0e0"/><rect x="2" y="8.5" width="9" height="2" fill="#e0e0e0"/></svg>
<!-- CHARACTERS -->
<svg style="left:0;top:0" width="1300" height="691" viewBox="0 0 1300 691">
<defs>
<linearGradient id="shirtG" x1="0" y1="0" x2="1" y2="0.3"><stop offset="0" stop-color="#a9570f"/><stop offset="0.3" stop-color="#c26d1e"/><stop offset="0.75" stop-color="#c8741f"/><stop offset="1" stop-color="#ae5c10"/></linearGradient>
<linearGradient id="tunicG" x1="0" y1="0" x2="0" y2="1"><stop offset="0" stop-color="#c06b1c"/><stop offset="0.6" stop-color="#c6721b"/><stop offset="1" stop-color="#aa5a0e"/></linearGradient>
<linearGradient id="skinG" x1="0" y1="0" x2="1" y2="0"><stop offset="0" stop-color="#f9caad"/><stop offset="1" stop-color="#f3a886"/></linearGradient>
<linearGradient id="legG" x1="0" y1="0" x2="1" y2="0"><stop offset="0" stop-color="#f9c8ab"/><stop offset="0.55" stop-color="#f6b191"/><stop offset="1" stop-color="#ee9573"/></linearGradient>
<g id="man">
<ellipse cx="499" cy="477.4" rx="69.4" ry="8" fill="#a5a5a5"/>
<!-- legs -->
<path d="M481,405 Q486,430 488,443.4 Q489,455 488,462.2 Q486,466 483.7,466.5 Q478,469 475,470.9 Q470,472 469.9,473.8 Q470.5,477 473.5,477.4 Q481,477.5 488,476.7 Q496,475 502.5,472.3 Q504.5,470 503.9,468 Q501.5,463 501,457.9 Q502,443 503.9,428.9 Q505,418 505.4,408.7 Z" fill="url(#legG)" stroke="#d37b58" stroke-width="0.6"/>
<path d="M512,404 L537,404 Q537.5,428 535.7,440.5 Q534,452 532.8,460.8 Q533.5,465 534.3,469.4 Q536,473 535.7,476.7 Q535,481 532.8,483.2 Q525,484.5 516.9,483.9 Q514.5,482 515.5,478.1 Q517,472 519.8,466.5 Q520.5,455 519.8,443.4 Q516,425 512,404 Z" fill="url(#legG)" stroke="#d37b58" stroke-width="0.6"/>
<path d="M472,474.5 Q474.5,476 477,474.8 M518,481 L518.5,483.5 M522,481.5 L522,484 M526,481.5 L526,484 M529.5,481 L529.5,483.5 M497,462 Q499,466 498,470 M531,458 Q533,461 532.5,465" fill="none" stroke="#d37b58" stroke-width="0.6"/>
<!-- dhoti -->
<path d="M473.3,351 L503,351 Q505,380 508,403.7 Q507,410 505.2,411 Q494,413 482,414.6 Q478.5,414.5 478.4,413.8 Q477.5,405 477.6,400.8 Q475,390 474.7,383.4 Q473.5,365 473.3,351 Z" fill="#f8eddd" stroke="#ddcfb5" stroke-width="0.6"/>
<path d="M502,349 L534.1,348.7 Q540,365 539.9,383.4 Q540.5,398 539.9,410.9 Q537,413 531.2,412.4 Q521,410 512.4,408 Q509,406 508,403.7 Q505,375 502,349 Z" fill="#f8eddd" stroke="#ddcfb5" stroke-width="0.6"/>
<path d="M474.6,361 Q477,368 482,368.8 Q492,368 498.5,355 Q496,366 490,370.5 Q483,373.5 475,368 Z" fill="#e3d4b9"/>
<path d="M475.5,376 Q479,387 485,388 Q496,386 501.5,366.5 Q501,381 494,389 Q485,393.5 476,385 Z" fill="#e3d4b9"/>
<path d="M477.5,391 Q481,400 487,401.5 Q499,400 505.5,388 Q503,400 496,404 Q486,407 478.5,399 Z" fill="#e3d4b9"/>
<path d="M501.5,356 Q506,367 514,369 Q524,371 534.8,366.5 Q536,371 534,373 Q523,376.5 512,374 Q504,370 502,361 Z" fill="#e3d4b9"/>
<path d="M505,371 Q510,385 518,388.2 Q528,390 538,386.5 Q540,391 538.5,393 Q527,396 516,393.5 Q507,389 505.3,377 Z" fill="#e3d4b9"/>
<path d="M507.4,390 Q512,400 520,401.8 Q530,403 539,401 Q540.5,405 539.5,406.5 Q528,409 518,406.5 Q510,403.5 507.7,395 Z" fill="#e3d4b9"/>
<path d="M476,363 Q482,367 490,366 M476.5,380 Q483,385 491,384 M478,394 Q484,399 492,398 M505,362 Q512,367 522,367.5 M507,378 Q514,386 525,386 M509,394 Q516,400 527,400" fill="none" stroke="#fbf4ea" stroke-width="1.2" opacity="0.6"/>
<!-- left arm (behind tunic) -->
<path d="M477,195.5 Q471,204 471.1,213.3 Q469.5,224 469,235 Q467,246 465.3,255.3 Q463.5,270 462.5,285 Q460,292 458,298 Q456,302 455.2,309.6 Q455,313 458,319 Q460,324 465.4,325.5 Q470,325 474,320 Q474,317 470,315 Q469,308 469,298 Q471,292 474,285 Q477,272 479,260 L481,200 Z" fill="url(#skinG)" stroke="#d37b58" stroke-width="0.6"/>
<path d="M458.5,311 Q461,320 466.5,322.5 M461,305 Q463,315 469,318.5 M462.5,302 Q463,296 465,292" fill="none" stroke="#d98462" stroke-width="0.5"/>
<!-- right arm -->
<path d="M541.3,193.8 Q547,197 550,204.6 Q551.8,210 551.5,216.2 Q551.5,227 550.8,237.9 Q549,247 547.1,255.3 Q547,262 546.4,266.9 Q548,272 547.1,281.7 Q544,292 539.9,303.4 Q537,310 534.1,315 L521,312 Q524,308 526.9,303.4 Q530,292 532.7,281.7 Q529,270 529.8,262 Q529,258 528.3,258.2 Q530,250 531.2,245.1 Q532,239 532.7,233.6 Z" fill="url(#skinG)" stroke="#d37b58" stroke-width="0.6"/>
<path d="M547,225 Q545,235 546,246 M536,240 Q535,250 536,258" fill="none" stroke="#e0906c" stroke-width="0.6"/>
<!-- tunic lower -->
<path d="M480.5,269 L525.4,269 Q527,283 529.8,296.2 Q533,311 535.6,325.2 Q538,337 539.9,346.9 Q540.5,348.5 539.9,348.3 Q532,351 524,351.2 Q514,352.5 503.7,351.9 Q493,351 483.4,349.8 Q476,348.5 469.7,346.9 Q470,343 471.1,339.6 Q473,322 476.2,303.4 Q478.5,287 480.5,271.6 Z" fill="url(#tunicG)" stroke="#8a4810" stroke-width="0.5"/>
<path d="M469.7,345.5 Q480,348 490,349 Q505,351 524,349.8 Q532,349 540,345.5 L539.9,348.3 Q532,351 524,351.2 Q514,352.5 503.7,351.9 Q493,351 483.4,349.8 Q476,348.5 469.7,346.9 Z" fill="#9f5208"/>
<path d="M480.5,272 Q478,300 475,330 Q473,340 472,346" fill="none" stroke="#b0600e" stroke-width="2.5" opacity="0.6"/>
<!-- tunic upper -->
<path d="M476.9,195.9 Q485,191 493.6,187.2 L497.2,217.6 L498.6,221.3 L519.6,185.8 Q531,189 541.3,193.8 Q542.5,195 542.8,195.9 Q537,214 532.7,233.6 Q531.2,245 528.3,258.2 L526,262 L481.3,262 Q480.5,258 480.5,258.2 Q479.1,245 479.1,230.7 Q478,212 476.9,195.9 Z" fill="url(#shirtG)" stroke="#8a4810" stroke-width="0.5"/>
<path d="M493.6,187.2 Q506,183 519.6,185.8 L498.6,221.3 L497.2,217.6 Z" fill="#f5b594"/>
<path d="M495.5,207 L498.6,221.3 L502.5,214.5 Q499,212 495.5,207 Z" fill="#f4ebd8"/>
<path d="M497,199 Q502,196 507,199 M505,196 Q510,193 514,196 M500,190 Q501,195 499,200" fill="none" stroke="#d98a66" stroke-width="0.6"/>
<path d="M484,228 Q489,227.5 494,230 M501,230 Q508,229 515,231.5" fill="none" stroke="#8c470c" stroke-width="0.7"/>
<path d="M503.5,273 Q507,297 513.8,325 M485,275 Q483.5,295 482,316" fill="none" stroke="#6e3a0a" stroke-width="0.6"/>
<rect x="500.5" y="299.7" width="4" height="4" rx="0.6" fill="#d2a66a" stroke="#4a2a0e" stroke-width="0.9"/>
<!-- belt -->
<path d="M481.3,260.4 Q503,259.5 525.4,258.9 L525.4,269 Q503,270 482,270.5 Z" fill="#f5ecdb" stroke="#d3c3a2" stroke-width="0.6"/>
<path d="M489,261.5 Q487.5,266 489.5,270 M492.5,261 Q491,266 493,270 M497,261 Q499,265 497.5,270 M500.8,261 Q502,266 500.5,269.8" fill="none" stroke="#cdbd9c" stroke-width="0.6"/>
<!-- right hand -->
<path d="M521,312 Q519.5,314 518.2,315 Q515,319 513.1,325.2 Q513,331 515.3,335.3 Q518,337 521,336.7 Q526,334 529.8,329.5 Q533.5,324 535.6,317.9 L534.1,315 Z" fill="#f7178 Z" fill="#e89a78"/>
<!-- bun & back hair -->
<path d="M526,128 Q533,135 532.8,142 Q533,147 531,150 L522,152 Z" fill="#3f1409"/>
<path d="M521,146 L531.2,141 Q533.5,152 533,163 L522,167 Z" fill="#3f1409"/>
<path d="M523,162 Q530,159 533.8,165 Q535,172 530.5,176.2 Q526,178 521.5,177 Q518.5,175.5 519,172 Q519.5,166 523,162 Z" fill="#3f1409"/>
<!-- face -->
<path d="M486,147.3 Q485.5,155 486,162 Q487,168 489.5,172.5 Q492.5,177 496.5,179.4 Q499.5,181.5 503.4,182 Q508,181.8 512,180.3 Q516,177.5 519,174.2 Q521,170 521.6,165.6 Q522.5,158 522.5,150 Q521.5,145 519,141.3 Q516,137 512,135.2 Q508,133 503.4,132.6 Q498.5,132.8 494.7,134.3 Q491,137 488.6,140.4 Q487,143.5 486,147.3 Z" fill="url(#skinG)" stroke="#c8704c" stroke-width="0.6"/>
<path d="M514,176 Q519,171 520.5,163 Q521,170 517,176 Z" fill="#eb9a79" opacity="0.7"/>
<!-- hair front -->
<path d="M486,147.3 Q483,141 482.6,136 Q484,131 486,129 Q487.5,125 490.4,122.2 Q494.5,119 500,118.7 Q506,118.3 512,119.5 Q519,121.5 524.2,125.6 Q528.5,129.5 530.3,134.3 Q531.5,139 531.2,144.7 Q530.8,148.5 529.4,151.7 L522.5,152 Q522.5,148 522.5,150 Q521.5,145 519,141.3 Q516,137 512,135.2 Q508,133 503.4,132.6 Q498.5,132.8 494.7,134.3 Q491,137 488.6,140.4 Q487,143.5 486,147.3 Z" fill="#3f1409"/>
<path d="M492,124 Q500,121 510,122.5 M486,133 Q489,128 492,126" fill="none" stroke="#6a2a14" stroke-width="0.9" opacity="0.7"/>
<ellipse cx="527.2" cy="158" rx="4.7" ry="8.2" fill="#f0a27e" stroke="#c8704c" stroke-width="0.6"/>
<path d="M526,153 Q529,156 527,162" fill="none" stroke="#c8704c" stroke-width="0.6"/>
<!-- features -->
<path d="M486.2,146.3 Q489,143.2 496,144 Q493,145.2 486.2,146.3 Z M501.5,145.2 Q505,142 509,142.3 Q513.5,143 516.3,147.8 Q512,145.2 508.5,144.8 Q505,144.8 501.5,145.2 Z" fill="#1a0b05" stroke="#1a0b05" stroke-width="1.1" stroke-linejoin="round"/>
<ellipse cx="492.7" cy="152.6" rx="3.3" ry="2" fill="#fff"/>
<ellipse cx="508" cy="152.8" rx="4.5" ry="2.1" fill="#fff"/>
<circle cx="493.6" cy="152.6" r="1.8" fill="#2a130a"/>
<circle cx="509" cy="152.7" r="2" fill="#2a130a"/>
<circle cx="494" cy="152" r="0.5" fill="#fff"/>
<circle cx="509.5" cy="152" r="0.5" fill="#fff"/>
<path d="M489.2,151.4 Q492.5,149.6 496.2,151 M503.2,151.6 Q508,149.3 513,151.8" fill="none" stroke="#1e0d06" stroke-width="1"/>
<path d="M497.6,147.6 Q496,154 494,160.3 Q493,162.5 494.5,164 Q496.5,165.5 498.2,165 Q501,164.5 502.8,162.7" fill="none" stroke="#b8664a" stroke-width="0.7"/>
<path d="M500,163.8 Q501,162.5 502.3,163" fill="none" stroke="#a55a40" stroke-width="0.6"/>
<path d="M492.6,168.4 Q499,169.8 506.3,168.8" fill="none" stroke="#b06248" stroke-width="0.9"/>
<path d="M495,170.8 Q499.5,172.6 503.8,170.8" fill="none" stroke="#e39a7e" stroke-width="0.9"/>
<path d="M499,137.8 L499.2,142.4" stroke="#c8281a" stroke-width="1.3" stroke-linecap="round"/>
</g>
<g id="strap1">
<path d="M516.7,261 L525.4,261 L524,273 Q523.2,285 523.2,296.2 Q522.5,306 521,316 L518.9,316 Q519,306 518.2,296.2 Q517,285 516,273 Z" fill="#f5ecdb" stroke="#d3c3a2" stroke-width="0.6"/>
<!-- right hand -->
<path d="M521,312 Q519.5,314 518.2,315 Q515,319 513.1,325.2 Q513,331 515.3,335.3 Q518,337 521,336.7 Q526,334 529.8,329.5 Q533.5,324 535.6,317.9 L534.1,315 Z" fill="#f7bb9b" stroke="#d37b58" stroke-width="0.6"/>
<path d="M516,327 Q519,330 522,331 M518,322 Q522,326 525,327" fill="none" stroke="#d37b58" stroke-width="0.5"/>
</g>
<g id="strap2">
<path d="M521,312 Q519.5,314 518.2,315 Q515,319 513.5,326 Q514,333 516,337 Q519,338.5 522,337.5 Q527,334 530,329.5 Q533.5,324 535.6,317.9 L534.1,315 Z" fill="#f7bb9b" stroke="#d37b58" stroke-width="0.6"/>
<path d="M515.5,261 L525.5,261 L524.5,275 Q523.8,290 523.5,300 Q524,312 526,322 Q528,326 528.5,329 Q524,330 520,329 Q516,330 513.5,328 Q515.5,322 516,312 Q516.5,300 516.5,290 Q516,280 515.5,261 Z" fill="#f5ecdb" stroke="#d3c3a2" stroke-width="0.6"/>
<path d="M518,318 Q518.5,324 517.5,328 M522,320 Q523,325 522.5,329" fill="none" stroke="#d3c3a2" stroke-width="0.5"/>
</g>
</defs>
<use href="#man"/>
<use href="#man" transform="translate(151.5,0)"/>
<use href="#strap1"/>
<use href="#strap2" transform="translate(151.5,0)"/>
<rect x="429.5" y="118.5" width="138.5" height="368" fill="none" stroke="#6db4cf" stroke-width="1"/>
<rect x="580.5" y="118.5" width="138.5" height="368" fill="none" stroke="#6db4cf" stroke-width="1"/>
<path d="M551,116 V121 M548.5,118.5 H553.5 M702.5,116 V121 M700,118.5 H705" stroke="#2a2a2a" stroke-width="0.8"/>
</svg>
</body></html>
